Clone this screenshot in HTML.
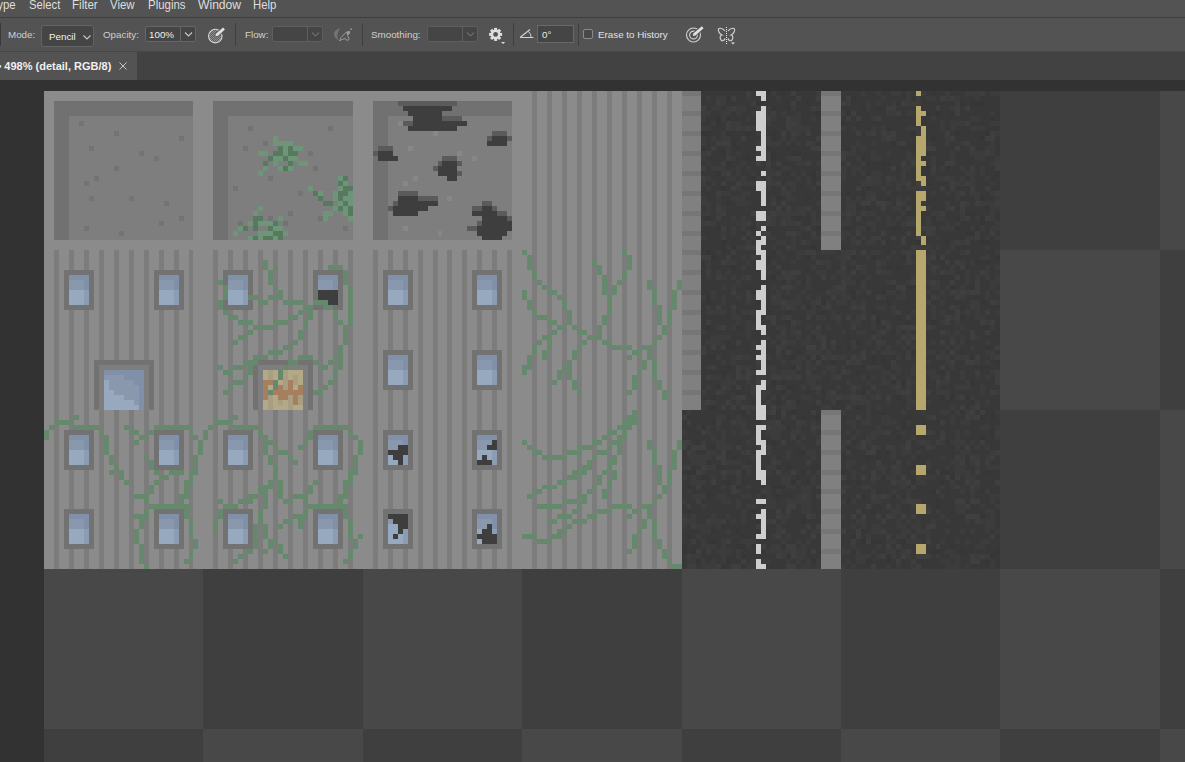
<!DOCTYPE html>
<html><head><meta charset="utf-8"><title>Photoshop</title>
<style>
*{margin:0;padding:0;box-sizing:border-box}
html,body{width:1185px;height:762px;overflow:hidden;background:#323232;font-family:"Liberation Sans",sans-serif;}
#app{position:relative;width:1185px;height:762px;overflow:hidden;background:#323232}
.abs{position:absolute}
#menubar{left:0;top:0;width:1185px;height:17px;background:#535353}
#menubar span{position:absolute;top:-3.3px;font-size:12.6px;line-height:16px;color:#dedede;white-space:nowrap;transform-origin:0 0}
#mline{left:0;top:17px;width:1185px;height:1px;background:#3e3e3e}
#optbar{left:0;top:18px;width:1185px;height:33px;background:#535353}
#oline{left:0;top:51px;width:1185px;height:1px;background:#464646}
#tabbar{left:0;top:52px;width:1185px;height:28px;background:#424242}
#tab{left:0;top:52px;width:137px;height:28px;background:#535353}
.lbl{position:absolute;font-size:9.8px;line-height:12px;color:#cfcfcf;white-space:nowrap}
.sep{position:absolute;top:23px;width:1px;height:23px;background:#3f3f3f}
.box{position:absolute;background:#454545;border:1px solid #666}
.art{position:absolute;left:0;top:0}
svg.ic{position:absolute;overflow:visible}
</style></head><body><div id="app">
<svg class="art" width="1185" height="762" viewBox="0 0 1185 762" shape-rendering="crispEdges"><path fill="#767676" d="M682 91h19v5h-19zM821 91h20v5h-20zM682 111h19v5h-19zM821 111h20v5h-20zM682 131h19v5h-19zM821 131h20v5h-20zM682 151h19v5h-19zM821 151h20v5h-20zM682 171h19v5h-19zM821 171h20v5h-20zM682 191h19v5h-19zM821 191h20v5h-20zM682 211h19v5h-19zM821 211h20v5h-20zM682 231h19v5h-19zM821 231h20v5h-20zM682 250h19v5h-19zM682 270h19v5h-19zM682 290h19v5h-19zM682 310h19v5h-19zM682 330h19v5h-19zM682 350h19v5h-19zM682 370h19v5h-19zM682 390h19v5h-19zM821 410h20v5h-20zM821 430h20v5h-20zM821 450h20v5h-20zM821 470h20v5h-20zM821 489h20v5h-20zM821 509h20v5h-20zM821 529h20v5h-20zM821 549h20v5h-20z"/><path fill="#383838" d="M701 91h45v5h-45zM751 91h5v5h-5zM776 91h5v5h-5zM786 91h5v5h-5zM796 91h20v5h-20zM841 91h20v5h-20zM866 91h10v5h-10zM881 91h10v5h-10zM901 91h5v5h-5zM911 91h5v5h-5zM926 91h5v5h-5zM936 91h9v5h-9zM950 91h15v5h-15zM985 91h5v5h-5zM701 96h5v5h-5zM711 96h5v5h-5zM736 96h10v5h-10zM751 96h10v5h-10zM766 96h10v5h-10zM781 96h15v5h-15zM801 96h15v5h-15zM841 96h5v5h-5zM856 96h25v5h-25zM886 96h20v5h-20zM921 96h5v5h-5zM936 96h4v5h-4zM960 96h15v5h-15zM980 96h20v5h-20zM701 101h15v5h-15zM726 101h25v5h-25zM761 101h30v5h-30zM796 101h10v5h-10zM811 101h10v5h-10zM851 101h15v5h-15zM881 101h10v5h-10zM921 101h34v5h-34zM965 101h5v5h-5zM985 101h15v5h-15zM706 106h5v5h-5zM721 106h5v5h-5zM746 106h10v5h-10zM776 106h10v5h-10zM796 106h15v5h-15zM841 106h20v5h-20zM871 101h5v10h-5zM881 106h5v5h-5zM896 106h20v5h-20zM921 106h15v5h-15zM960 106h5v5h-5zM970 106h30v5h-30zM711 111h10v5h-10zM731 111h5v5h-5zM741 111h10v5h-10zM776 111h5v5h-5zM786 111h10v5h-10zM801 111h15v5h-15zM856 111h30v5h-30zM901 111h5v5h-5zM931 111h5v5h-5zM940 106h10v10h-10zM960 111h30v5h-30zM706 116h10v5h-10zM731 116h15v5h-15zM751 116h5v5h-5zM776 116h10v5h-10zM801 116h10v5h-10zM816 116h5v5h-5zM841 116h5v5h-5zM851 116h5v5h-5zM861 116h10v5h-10zM881 116h35v5h-35zM921 116h10v5h-10zM936 116h34v5h-34zM980 116h10v5h-10zM995 111h5v10h-5zM701 121h10v5h-10zM721 121h5v5h-5zM741 121h15v5h-15zM771 121h15v5h-15zM801 121h20v5h-20zM846 121h10v5h-10zM861 121h55v5h-55zM921 121h19v5h-19zM970 121h10v5h-10zM985 121h5v5h-5zM711 126h15v5h-15zM766 126h20v5h-20zM846 126h5v5h-5zM856 126h15v5h-15zM891 126h15v5h-15zM926 126h14v5h-14zM945 121h5v10h-5zM955 126h15v5h-15zM985 126h15v5h-15zM711 131h10v5h-10zM731 131h15v5h-15zM751 131h5v5h-5zM766 131h5v5h-5zM801 131h5v5h-5zM811 126h10v10h-10zM841 131h15v5h-15zM861 131h5v5h-5zM876 126h5v10h-5zM896 131h15v5h-15zM926 131h19v5h-19zM950 131h5v5h-5zM960 131h25v5h-25zM706 136h5v5h-5zM716 136h5v5h-5zM731 136h10v5h-10zM746 136h15v5h-15zM776 131h5v10h-5zM786 131h5v10h-5zM796 136h20v5h-20zM841 136h40v5h-40zM896 136h20v5h-20zM926 136h5v5h-5zM936 136h9v5h-9zM955 136h25v5h-25zM706 141h10v5h-10zM736 141h20v5h-20zM781 141h5v5h-5zM791 141h5v5h-5zM801 141h5v5h-5zM816 141h5v5h-5zM841 141h15v5h-15zM861 141h10v5h-10zM876 141h15v5h-15zM906 141h10v5h-10zM931 141h14v5h-14zM950 141h10v5h-10zM970 141h20v5h-20zM706 146h5v5h-5zM716 146h10v5h-10zM771 146h15v5h-15zM791 146h20v5h-20zM841 146h5v5h-5zM856 146h5v5h-5zM866 146h35v5h-35zM906 146h5v5h-5zM936 146h19v5h-19zM960 146h10v5h-10zM975 146h10v5h-10zM711 151h10v5h-10zM731 146h5v10h-5zM741 146h15v10h-15zM776 151h15v5h-15zM856 151h15v5h-15zM876 151h10v5h-10zM891 151h15v5h-15zM911 151h5v5h-5zM931 151h19v5h-19zM955 151h15v5h-15zM995 136h5v20h-5zM706 156h20v5h-20zM736 156h10v5h-10zM751 156h5v5h-5zM776 156h10v5h-10zM801 151h20v10h-20zM846 156h10v5h-10zM866 156h5v5h-5zM881 156h25v5h-25zM921 156h10v5h-10zM936 156h14v5h-14zM955 156h20v5h-20zM985 156h10v5h-10zM701 161h5v5h-5zM711 161h10v5h-10zM731 161h10v5h-10zM746 161h10v5h-10zM761 161h5v5h-5zM771 161h5v5h-5zM781 161h15v5h-15zM811 161h5v5h-5zM841 161h5v5h-5zM851 161h10v5h-10zM871 161h10v5h-10zM891 161h10v5h-10zM906 161h5v5h-5zM926 161h5v5h-5zM936 161h9v5h-9zM955 161h35v5h-35zM706 166h5v5h-5zM726 166h10v5h-10zM741 166h5v5h-5zM751 166h15v5h-15zM771 166h10v5h-10zM791 166h30v5h-30zM861 166h20v5h-20zM886 166h5v5h-5zM911 166h5v5h-5zM921 166h5v5h-5zM936 166h4v5h-4zM950 166h10v5h-10zM965 166h5v5h-5zM701 171h15v5h-15zM731 171h5v5h-5zM741 171h10v5h-10zM756 171h5v5h-5zM781 171h5v5h-5zM796 171h5v5h-5zM806 171h5v5h-5zM846 166h5v10h-5zM856 171h5v5h-5zM881 171h20v5h-20zM921 171h10v5h-10zM936 171h29v5h-29zM975 166h5v10h-5zM985 166h10v10h-10zM711 176h15v5h-15zM736 176h5v5h-5zM746 176h5v5h-5zM761 176h5v5h-5zM771 176h25v5h-25zM801 176h5v5h-5zM816 176h5v5h-5zM846 176h20v5h-20zM896 176h5v5h-5zM906 171h10v10h-10zM926 176h10v5h-10zM955 176h5v5h-5zM965 176h5v5h-5zM975 176h10v5h-10zM716 181h5v5h-5zM726 181h10v5h-10zM781 181h5v5h-5zM796 181h10v5h-10zM811 181h5v5h-5zM841 181h20v5h-20zM881 176h5v10h-5zM891 181h5v5h-5zM911 181h5v5h-5zM931 181h19v5h-19zM975 181h15v5h-15zM995 176h5v10h-5zM701 186h5v5h-5zM711 186h10v5h-10zM726 186h5v5h-5zM741 186h15v5h-15zM771 186h10v5h-10zM786 186h5v5h-5zM796 186h15v5h-15zM841 186h15v5h-15zM861 186h5v5h-5zM871 186h10v5h-10zM886 186h10v5h-10zM901 186h5v5h-5zM926 186h14v5h-14zM945 186h5v5h-5zM955 186h15v5h-15zM975 186h10v5h-10zM990 186h10v5h-10zM701 191h15v5h-15zM731 191h10v5h-10zM751 191h10v5h-10zM766 191h15v5h-15zM791 191h30v5h-30zM851 191h10v5h-10zM891 191h25v5h-25zM926 191h5v5h-5zM936 191h9v5h-9zM950 191h5v5h-5zM965 191h5v5h-5zM980 191h10v5h-10zM706 196h10v5h-10zM721 196h10v5h-10zM746 196h15v5h-15zM781 196h5v5h-5zM796 196h10v5h-10zM811 196h10v5h-10zM851 196h5v5h-5zM861 196h5v5h-5zM876 191h10v10h-10zM901 196h5v5h-5zM911 196h5v5h-5zM926 196h29v5h-29zM960 196h15v5h-15zM985 196h10v5h-10zM721 201h5v5h-5zM731 201h5v5h-5zM751 201h10v5h-10zM766 196h5v10h-5zM776 201h5v5h-5zM786 201h30v5h-30zM856 201h5v5h-5zM871 201h5v5h-5zM891 196h5v10h-5zM906 201h10v5h-10zM926 201h19v5h-19zM950 201h10v5h-10zM970 201h5v5h-5zM701 206h5v5h-5zM726 206h50v5h-50zM781 206h5v5h-5zM791 206h5v5h-5zM811 206h10v5h-10zM841 191h5v20h-5zM861 206h5v5h-5zM871 206h10v5h-10zM886 206h5v5h-5zM901 206h5v5h-5zM931 206h14v5h-14zM955 206h5v5h-5zM965 206h20v5h-20zM726 211h25v5h-25zM806 211h5v5h-5zM856 211h5v5h-5zM876 211h25v5h-25zM911 206h5v10h-5zM921 211h10v5h-10zM945 211h15v5h-15zM975 211h15v5h-15zM701 216h5v5h-5zM711 201h5v20h-5zM721 216h10v5h-10zM736 216h5v5h-5zM746 216h10v5h-10zM791 216h5v5h-5zM801 216h5v5h-5zM816 211h5v10h-5zM841 216h5v5h-5zM851 216h5v5h-5zM861 216h15v5h-15zM881 216h5v5h-5zM891 216h5v5h-5zM901 216h5v5h-5zM945 216h10v5h-10zM970 216h5v5h-5zM995 211h5v10h-5zM716 221h20v5h-20zM751 221h5v5h-5zM776 216h5v10h-5zM801 221h10v5h-10zM851 221h15v5h-15zM876 221h10v5h-10zM896 221h5v5h-5zM921 216h5v10h-5zM931 221h14v5h-14zM950 221h5v5h-5zM960 221h20v5h-20zM985 221h10v5h-10zM701 226h15v5h-15zM736 226h5v5h-5zM746 226h5v5h-5zM771 226h30v5h-30zM811 226h5v5h-5zM841 226h5v5h-5zM876 226h15v5h-15zM901 226h15v5h-15zM936 226h4v5h-4zM960 226h10v5h-10zM985 226h5v5h-5zM701 231h20v5h-20zM726 226h5v10h-5zM736 231h10v5h-10zM751 231h5v5h-5zM771 231h15v5h-15zM801 231h10v5h-10zM816 231h5v5h-5zM851 226h5v10h-5zM861 231h20v5h-20zM886 231h20v5h-20zM911 231h5v5h-5zM921 231h5v5h-5zM936 231h29v5h-29zM980 231h10v5h-10zM995 231h5v5h-5zM706 236h15v4h-15zM726 236h15v4h-15zM746 236h5v4h-5zM756 236h5v4h-5zM776 236h15v4h-15zM796 236h15v4h-15zM846 236h5v4h-5zM856 236h5v4h-5zM866 236h5v4h-5zM881 236h10v4h-10zM896 236h5v4h-5zM926 236h10v4h-10zM940 236h25v4h-25zM980 236h5v4h-5zM990 236h5v4h-5zM726 240h20v5h-20zM751 240h5v5h-5zM766 240h10v5h-10zM786 240h5v5h-5zM796 240h5v5h-5zM811 240h10v5h-10zM841 240h10v5h-10zM861 240h5v5h-5zM876 240h5v5h-5zM891 240h10v5h-10zM906 236h10v9h-10zM926 240h19v5h-19zM970 240h10v5h-10zM701 240h20v10h-20zM776 245h10v5h-10zM796 245h15v5h-15zM846 245h65v5h-65zM931 245h5v5h-5zM940 245h10v5h-10zM955 245h30v5h-30zM990 240h10v10h-10zM701 250h5v5h-5zM711 250h5v5h-5zM721 250h10v5h-10zM736 250h20v5h-20zM766 245h5v10h-5zM781 250h15v5h-15zM816 245h5v10h-5zM836 250h5v5h-5zM856 250h5v5h-5zM866 250h5v5h-5zM881 250h5v5h-5zM896 250h5v5h-5zM926 250h5v5h-5zM936 250h9v5h-9zM950 250h10v5h-10zM970 250h25v5h-25zM716 255h10v5h-10zM731 255h10v5h-10zM746 255h5v5h-5zM771 255h10v5h-10zM786 255h10v5h-10zM801 255h5v5h-5zM816 255h20v5h-20zM856 255h10v5h-10zM876 255h10v5h-10zM891 255h10v5h-10zM911 255h5v5h-5zM945 255h35v5h-35zM990 255h5v5h-5zM711 260h10v5h-10zM736 260h10v5h-10zM751 260h5v5h-5zM776 260h15v5h-15zM796 260h20v5h-20zM846 260h5v5h-5zM856 260h20v5h-20zM886 260h20v5h-20zM931 260h9v5h-9zM950 260h5v5h-5zM965 260h5v5h-5zM980 260h5v5h-5zM990 260h10v5h-10zM711 265h20v5h-20zM736 265h5v5h-5zM746 265h10v5h-10zM766 265h10v5h-10zM781 265h30v5h-30zM816 265h10v5h-10zM831 260h10v10h-10zM846 265h10v5h-10zM881 265h5v5h-5zM891 265h5v5h-5zM901 265h15v5h-15zM940 265h10v5h-10zM955 265h5v5h-5zM965 265h20v5h-20zM990 265h5v5h-5zM721 270h5v5h-5zM731 270h30v5h-30zM771 270h10v5h-10zM801 270h15v5h-15zM826 270h10v5h-10zM846 270h5v5h-5zM856 270h5v5h-5zM866 265h10v10h-10zM891 270h25v5h-25zM926 265h5v10h-5zM936 270h4v5h-4zM955 270h10v5h-10zM970 270h10v5h-10zM990 270h10v5h-10zM701 260h5v20h-5zM711 270h5v10h-5zM726 275h5v5h-5zM736 275h5v5h-5zM751 275h10v5h-10zM766 275h5v5h-5zM796 275h10v5h-10zM811 275h10v5h-10zM826 275h5v5h-5zM836 275h5v5h-5zM851 275h10v5h-10zM871 275h40v5h-40zM926 275h14v5h-14zM945 275h10v5h-10zM960 275h5v5h-5zM980 275h5v5h-5zM990 275h5v5h-5zM701 280h35v5h-35zM741 280h40v5h-40zM791 280h5v5h-5zM811 280h30v5h-30zM866 280h20v5h-20zM896 280h10v5h-10zM940 280h10v5h-10zM955 280h10v5h-10zM970 275h5v10h-5zM701 285h20v5h-20zM726 285h5v5h-5zM751 285h10v5h-10zM766 285h5v5h-5zM776 285h5v5h-5zM796 285h10v5h-10zM811 285h20v5h-20zM846 285h15v5h-15zM866 285h25v5h-25zM926 285h5v5h-5zM940 285h5v5h-5zM955 285h5v5h-5zM965 285h10v5h-10zM980 280h10v10h-10zM995 285h5v5h-5zM701 290h10v5h-10zM716 290h15v5h-15zM736 285h10v10h-10zM751 290h5v5h-5zM766 290h10v5h-10zM781 290h5v5h-5zM791 290h10v5h-10zM806 290h20v5h-20zM846 290h5v5h-5zM861 290h5v5h-5zM871 290h10v5h-10zM896 290h5v5h-5zM931 290h9v5h-9zM945 290h5v5h-5zM980 290h5v5h-5zM990 290h5v5h-5zM716 295h5v5h-5zM726 295h10v5h-10zM741 295h5v5h-5zM781 295h15v5h-15zM801 295h5v5h-5zM811 295h5v5h-5zM821 295h10v5h-10zM836 295h5v5h-5zM856 295h20v5h-20zM886 295h10v5h-10zM906 290h10v10h-10zM926 295h5v5h-5zM940 295h15v5h-15zM965 295h20v5h-20zM990 295h10v5h-10zM711 300h10v5h-10zM726 300h20v5h-20zM751 300h5v5h-5zM766 295h5v10h-5zM801 300h10v5h-10zM831 300h5v5h-5zM846 300h5v5h-5zM856 300h5v5h-5zM866 300h20v5h-20zM891 300h25v5h-25zM931 300h9v5h-9zM945 300h25v5h-25zM985 300h5v5h-5zM711 305h5v5h-5zM721 305h10v5h-10zM736 305h25v5h-25zM766 305h15v5h-15zM796 305h5v5h-5zM831 305h20v5h-20zM866 305h10v5h-10zM886 305h5v5h-5zM896 305h20v5h-20zM936 305h14v5h-14zM965 305h5v5h-5zM980 305h20v5h-20zM701 300h5v15h-5zM726 310h5v5h-5zM736 310h5v5h-5zM771 310h15v5h-15zM816 305h5v10h-5zM836 310h25v5h-25zM876 310h15v5h-15zM901 310h10v5h-10zM936 310h4v5h-4zM945 310h10v5h-10zM960 310h5v5h-5zM970 310h5v5h-5zM980 310h5v5h-5zM990 310h5v5h-5zM701 315h30v5h-30zM761 315h5v5h-5zM776 315h5v5h-5zM791 310h15v10h-15zM811 315h5v5h-5zM826 310h5v10h-5zM841 315h5v5h-5zM851 315h5v5h-5zM866 310h5v10h-5zM881 315h15v5h-15zM901 315h5v5h-5zM936 315h9v5h-9zM965 315h10v5h-10zM985 315h15v5h-15zM711 320h25v5h-25zM751 315h5v10h-5zM761 320h10v5h-10zM776 320h10v5h-10zM801 320h35v5h-35zM841 320h10v5h-10zM861 320h10v5h-10zM891 320h15v5h-15zM911 315h5v10h-5zM926 305h5v20h-5zM936 320h4v5h-4zM950 320h5v5h-5zM960 320h20v5h-20zM701 320h5v10h-5zM711 325h5v5h-5zM726 325h5v5h-5zM741 315h5v15h-5zM766 325h10v5h-10zM796 325h10v5h-10zM811 325h5v5h-5zM821 325h5v5h-5zM831 325h20v5h-20zM856 325h15v5h-15zM876 325h10v5h-10zM891 325h5v5h-5zM936 325h24v5h-24zM965 325h20v5h-20zM995 320h5v10h-5zM706 330h40v5h-40zM766 330h15v5h-15zM786 325h5v10h-5zM801 330h10v5h-10zM821 330h20v5h-20zM846 330h10v5h-10zM866 330h10v5h-10zM886 330h5v5h-5zM901 330h5v5h-5zM911 330h5v5h-5zM926 330h14v5h-14zM950 330h5v5h-5zM960 330h10v5h-10zM975 330h10v5h-10zM990 330h10v5h-10zM701 335h10v5h-10zM731 335h15v5h-15zM751 330h10v10h-10zM771 335h5v5h-5zM786 335h10v5h-10zM801 335h5v5h-5zM826 335h20v5h-20zM851 335h20v5h-20zM881 335h20v5h-20zM926 335h24v5h-24zM965 335h5v5h-5zM980 335h20v5h-20zM701 340h5v5h-5zM721 340h5v5h-5zM731 340h5v5h-5zM741 340h10v5h-10zM756 340h5v5h-5zM766 340h5v5h-5zM776 340h5v5h-5zM796 340h5v5h-5zM811 340h10v5h-10zM836 340h15v5h-15zM861 340h5v5h-5zM871 340h5v5h-5zM886 340h10v5h-10zM901 340h5v5h-5zM911 340h5v5h-5zM926 340h5v5h-5zM936 340h4v5h-4zM945 340h5v5h-5zM955 335h5v10h-5zM970 340h15v5h-15zM990 340h10v5h-10zM706 345h5v5h-5zM716 345h5v5h-5zM736 345h15v5h-15zM786 345h20v5h-20zM816 345h5v5h-5zM826 340h5v10h-5zM841 345h5v5h-5zM856 345h20v5h-20zM881 345h5v5h-5zM891 345h10v5h-10zM906 345h5v5h-5zM926 345h19v5h-19zM950 345h5v5h-5zM960 345h10v5h-10zM975 345h10v5h-10zM990 345h5v5h-5zM706 350h55v5h-55zM766 345h10v10h-10zM781 350h5v5h-5zM791 350h5v5h-5zM801 350h5v5h-5zM821 350h5v5h-5zM831 350h30v5h-30zM896 350h10v5h-10zM936 350h4v5h-4zM945 350h5v5h-5zM955 350h5v5h-5zM965 350h20v5h-20zM995 350h5v5h-5zM701 355h5v5h-5zM721 355h10v5h-10zM751 355h5v5h-5zM771 355h5v5h-5zM781 355h10v5h-10zM806 355h5v5h-5zM846 355h5v5h-5zM866 350h5v10h-5zM901 355h5v5h-5zM911 355h5v5h-5zM926 355h10v5h-10zM950 355h5v5h-5zM980 355h10v5h-10zM701 360h20v5h-20zM726 360h5v5h-5zM736 360h20v5h-20zM766 360h15v5h-15zM786 360h5v5h-5zM811 360h5v5h-5zM821 360h10v5h-10zM836 360h10v5h-10zM861 360h10v5h-10zM876 350h5v15h-5zM886 355h5v10h-5zM896 360h20v5h-20zM931 360h14v5h-14zM955 360h10v5h-10zM980 360h5v5h-5zM990 360h5v5h-5zM701 365h5v5h-5zM716 365h10v5h-10zM731 365h5v5h-5zM751 365h5v5h-5zM776 365h15v5h-15zM801 360h5v10h-5zM816 365h10v5h-10zM846 365h15v5h-15zM881 365h5v5h-5zM926 365h14v5h-14zM945 365h5v5h-5zM955 365h25v5h-25zM990 365h10v5h-10zM701 370h20v5h-20zM726 370h10v5h-10zM741 370h5v5h-5zM776 370h5v5h-5zM796 370h10v5h-10zM811 370h10v5h-10zM826 370h5v5h-5zM836 365h5v10h-5zM851 370h5v5h-5zM861 370h20v5h-20zM891 370h5v5h-5zM901 365h10v10h-10zM936 370h4v5h-4zM980 370h10v5h-10zM701 375h5v5h-5zM721 375h5v5h-5zM731 375h5v5h-5zM766 370h5v10h-5zM801 375h5v5h-5zM821 375h10v5h-10zM841 375h20v5h-20zM876 375h5v5h-5zM886 375h5v5h-5zM896 375h10v5h-10zM911 375h5v5h-5zM926 375h5v5h-5zM940 375h5v5h-5zM950 370h10v10h-10zM965 370h10v10h-10zM980 375h5v5h-5zM990 375h5v5h-5zM701 380h20v5h-20zM736 380h10v5h-10zM751 375h5v10h-5zM776 380h5v5h-5zM786 380h20v5h-20zM816 380h30v5h-30zM851 380h15v5h-15zM871 380h10v5h-10zM950 380h15v5h-15zM975 380h20v5h-20zM701 385h5v5h-5zM711 385h5v5h-5zM731 385h5v5h-5zM766 385h10v5h-10zM796 385h5v5h-5zM806 385h5v5h-5zM821 385h15v5h-15zM841 385h10v5h-10zM861 385h10v5h-10zM876 385h15v5h-15zM901 385h5v5h-5zM926 380h10v10h-10zM940 385h15v5h-15zM970 385h10v5h-10zM985 385h15v5h-15zM706 390h10v5h-10zM726 390h10v5h-10zM741 385h10v10h-10zM771 390h10v5h-10zM791 390h15v5h-15zM811 390h5v5h-5zM836 390h15v5h-15zM856 390h5v5h-5zM871 390h5v5h-5zM881 390h15v5h-15zM931 390h5v5h-5zM950 390h30v5h-30zM985 390h5v5h-5zM701 395h10v5h-10zM716 395h15v5h-15zM746 395h10v5h-10zM766 395h5v5h-5zM786 395h15v5h-15zM811 395h15v5h-15zM866 395h5v5h-5zM881 395h5v5h-5zM891 395h5v5h-5zM901 395h5v5h-5zM911 385h5v15h-5zM926 395h14v5h-14zM975 395h25v5h-25zM716 400h10v5h-10zM731 400h5v5h-5zM741 400h10v5h-10zM761 400h5v5h-5zM771 400h5v5h-5zM781 400h5v5h-5zM801 400h15v5h-15zM821 400h10v5h-10zM841 400h10v5h-10zM871 400h15v5h-15zM891 400h10v5h-10zM931 400h39v5h-39zM980 400h5v5h-5zM990 400h10v5h-10zM706 405h5v5h-5zM716 405h5v5h-5zM726 405h5v5h-5zM736 405h5v5h-5zM766 405h5v5h-5zM776 405h5v5h-5zM831 405h15v5h-15zM851 405h5v5h-5zM861 405h5v5h-5zM871 405h5v5h-5zM881 405h25v5h-25zM911 405h5v5h-5zM926 405h24v5h-24zM955 405h5v5h-5zM965 405h5v5h-5zM980 405h20v5h-20zM682 410h5v5h-5zM691 410h50v5h-50zM796 405h15v10h-15zM816 405h5v10h-5zM846 410h20v5h-20zM886 410h15v5h-15zM906 410h15v5h-15zM926 410h14v5h-14zM950 410h5v5h-5zM975 410h5v5h-5zM985 410h10v5h-10zM687 415h29v5h-29zM731 415h5v5h-5zM741 415h5v5h-5zM751 410h5v10h-5zM771 415h5v5h-5zM786 410h5v10h-5zM796 415h5v5h-5zM806 415h10v5h-10zM841 415h15v5h-15zM861 415h5v5h-5zM891 415h15v5h-15zM911 415h15v5h-15zM936 415h14v5h-14zM955 415h10v5h-10zM985 415h5v5h-5zM995 415h5v5h-5zM682 420h5v5h-5zM691 420h20v5h-20zM721 420h10v5h-10zM746 420h15v5h-15zM786 420h10v5h-10zM806 420h5v5h-5zM816 420h5v5h-5zM841 420h5v5h-5zM856 420h5v5h-5zM871 410h10v15h-10zM896 420h5v5h-5zM911 420h10v5h-10zM926 420h10v5h-10zM945 420h5v5h-5zM955 420h5v5h-5zM970 420h30v5h-30zM682 425h14v5h-14zM711 425h5v5h-5zM721 425h20v5h-20zM746 425h10v5h-10zM791 425h5v5h-5zM841 425h10v5h-10zM856 425h20v5h-20zM881 425h15v5h-15zM926 425h54v5h-54zM990 425h5v5h-5zM687 430h14v5h-14zM711 430h10v5h-10zM726 430h5v5h-5zM736 430h5v5h-5zM751 430h5v5h-5zM761 430h5v5h-5zM801 425h10v10h-10zM816 430h5v5h-5zM841 430h5v5h-5zM851 430h5v5h-5zM861 430h10v5h-10zM891 430h10v5h-10zM906 425h10v10h-10zM960 430h5v5h-5zM970 430h20v5h-20zM682 435h29v5h-29zM716 435h5v5h-5zM726 435h25v5h-25zM761 435h10v5h-10zM781 430h10v10h-10zM806 435h10v5h-10zM841 435h10v5h-10zM856 435h10v5h-10zM876 435h20v5h-20zM901 435h10v5h-10zM916 435h24v5h-24zM945 430h10v10h-10zM960 435h20v5h-20zM985 435h10v5h-10zM691 440h5v5h-5zM706 440h10v5h-10zM726 440h10v5h-10zM741 440h5v5h-5zM751 440h5v5h-5zM766 440h5v5h-5zM776 440h5v5h-5zM786 440h10v5h-10zM801 440h15v5h-15zM856 440h5v5h-5zM871 440h35v5h-35zM911 440h5v5h-5zM931 440h5v5h-5zM965 440h5v5h-5zM975 440h5v5h-5zM985 440h15v5h-15zM687 445h4v5h-4zM706 445h5v5h-5zM731 445h5v5h-5zM741 445h15v5h-15zM771 445h30v5h-30zM806 445h15v5h-15zM851 445h5v5h-5zM866 445h5v5h-5zM911 445h15v5h-15zM936 445h14v5h-14zM960 445h5v5h-5zM970 445h5v5h-5zM980 445h5v5h-5zM990 445h10v5h-10zM696 450h10v5h-10zM716 450h5v5h-5zM731 450h10v5h-10zM751 450h5v5h-5zM771 450h15v5h-15zM791 450h5v5h-5zM841 450h5v5h-5zM851 450h15v5h-15zM881 445h5v10h-5zM896 445h5v10h-5zM911 450h5v5h-5zM921 450h39v5h-39zM970 450h20v5h-20zM682 450h5v10h-5zM711 455h5v5h-5zM726 455h5v5h-5zM736 455h15v5h-15zM781 455h5v5h-5zM791 455h20v5h-20zM816 450h5v10h-5zM841 455h25v5h-25zM871 455h5v5h-5zM881 455h10v5h-10zM896 455h15v5h-15zM921 455h19v5h-19zM945 455h10v5h-10zM965 455h5v5h-5zM995 455h5v5h-5zM682 460h9v5h-9zM711 460h10v5h-10zM741 460h5v5h-5zM761 455h10v10h-10zM781 460h25v5h-25zM811 460h10v5h-10zM856 460h20v5h-20zM881 460h15v5h-15zM901 460h5v5h-5zM911 460h15v5h-15zM931 460h19v5h-19zM990 460h10v5h-10zM691 465h10v5h-10zM721 465h20v5h-20zM761 465h5v5h-5zM781 465h5v5h-5zM791 465h20v5h-20zM841 460h5v10h-5zM851 465h10v5h-10zM866 465h10v5h-10zM931 465h14v5h-14zM965 465h10v5h-10zM682 470h5v5h-5zM706 470h15v5h-15zM751 460h5v15h-5zM771 470h5v5h-5zM781 470h10v5h-10zM796 470h5v5h-5zM811 470h5v5h-5zM856 470h15v5h-15zM876 470h5v5h-5zM886 465h5v10h-5zM901 465h10v10h-10zM926 470h10v5h-10zM950 465h5v10h-5zM970 470h5v5h-5zM980 455h5v20h-5zM990 470h10v5h-10zM687 475h4v5h-4zM696 475h5v5h-5zM726 475h10v5h-10zM741 475h15v5h-15zM791 475h5v5h-5zM801 475h10v5h-10zM846 470h5v10h-5zM856 475h5v5h-5zM866 475h5v5h-5zM896 475h5v5h-5zM906 475h10v5h-10zM936 475h9v5h-9zM960 475h5v5h-5zM975 475h25v5h-25zM682 480h9v5h-9zM706 475h5v10h-5zM731 480h5v5h-5zM746 480h15v5h-15zM766 475h15v10h-15zM801 480h5v5h-5zM816 475h5v10h-5zM841 480h5v5h-5zM851 480h5v5h-5zM861 480h10v5h-10zM876 480h15v5h-15zM926 480h14v5h-14zM955 480h10v5h-10zM980 480h15v5h-15zM691 485h5v4h-5zM701 485h10v4h-10zM716 475h5v14h-5zM726 485h5v4h-5zM741 485h5v4h-5zM751 485h15v4h-15zM796 485h5v4h-5zM811 485h5v4h-5zM851 485h10v4h-10zM871 485h30v4h-30zM906 485h5v4h-5zM916 485h24v4h-24zM945 480h5v9h-5zM960 485h10v4h-10zM980 485h20v4h-20zM682 485h5v9h-5zM691 489h15v5h-15zM711 489h20v5h-20zM741 489h20v5h-20zM781 489h20v5h-20zM811 489h10v5h-10zM846 489h25v5h-25zM881 489h10v5h-10zM896 489h10v5h-10zM911 489h20v5h-20zM940 489h20v5h-20zM965 489h5v5h-5zM975 489h5v5h-5zM990 489h10v5h-10zM682 494h9v5h-9zM711 494h5v5h-5zM726 494h15v5h-15zM751 494h5v5h-5zM761 494h5v5h-5zM771 489h5v10h-5zM781 494h15v5h-15zM811 494h5v5h-5zM841 494h15v5h-15zM866 494h5v5h-5zM911 494h29v5h-29zM945 494h25v5h-25zM975 494h15v5h-15zM687 499h9v5h-9zM701 499h20v5h-20zM731 499h5v5h-5zM741 499h15v5h-15zM856 499h15v5h-15zM881 499h20v5h-20zM921 499h15v5h-15zM965 499h5v5h-5zM980 499h10v5h-10zM995 499h5v5h-5zM691 504h10v5h-10zM706 504h30v5h-30zM741 504h5v5h-5zM756 504h10v5h-10zM776 499h10v10h-10zM796 504h5v5h-5zM841 504h25v5h-25zM871 504h5v5h-5zM881 504h5v5h-5zM891 504h5v5h-5zM901 504h10v5h-10zM940 499h15v10h-15zM970 504h10v5h-10zM985 504h10v5h-10zM682 504h5v10h-5zM691 509h50v5h-50zM756 509h5v5h-5zM781 509h5v5h-5zM811 499h10v15h-10zM841 509h15v5h-15zM861 509h10v5h-10zM876 509h15v5h-15zM901 509h15v5h-15zM931 504h5v10h-5zM940 509h10v5h-10zM965 509h20v5h-20zM687 514h4v5h-4zM696 514h15v5h-15zM716 514h10v5h-10zM731 514h10v5h-10zM746 509h5v10h-5zM766 509h10v10h-10zM791 509h10v10h-10zM816 514h5v5h-5zM846 514h5v5h-5zM856 514h5v5h-5zM866 514h10v5h-10zM881 514h5v5h-5zM896 514h5v5h-5zM906 514h5v5h-5zM916 514h24v5h-24zM945 514h20v5h-20zM985 514h5v5h-5zM696 519h10v5h-10zM726 519h5v5h-5zM736 519h5v5h-5zM746 519h10v5h-10zM776 519h5v5h-5zM786 519h15v5h-15zM806 519h15v5h-15zM841 519h15v5h-15zM866 519h15v5h-15zM886 519h10v5h-10zM901 519h5v5h-5zM911 519h5v5h-5zM921 519h10v5h-10zM936 519h9v5h-9zM950 519h15v5h-15zM970 519h5v5h-5zM687 524h4v5h-4zM711 524h5v5h-5zM726 524h30v5h-30zM781 524h25v5h-25zM811 524h5v5h-5zM841 524h10v5h-10zM856 524h5v5h-5zM881 524h15v5h-15zM906 524h5v5h-5zM921 524h5v5h-5zM936 524h49v5h-49zM995 509h5v20h-5zM682 529h19v5h-19zM716 529h10v5h-10zM731 529h5v5h-5zM741 529h15v5h-15zM766 524h10v10h-10zM786 529h15v5h-15zM806 529h5v5h-5zM846 529h10v5h-10zM866 524h5v10h-5zM886 529h15v5h-15zM911 529h5v5h-5zM931 529h14v5h-14zM950 529h10v5h-10zM965 529h5v5h-5zM975 529h10v5h-10zM990 529h5v5h-5zM682 534h5v5h-5zM691 534h5v5h-5zM701 534h40v5h-40zM746 534h10v5h-10zM766 534h5v5h-5zM781 534h5v5h-5zM791 534h20v5h-20zM816 534h5v5h-5zM861 534h5v5h-5zM871 534h15v5h-15zM891 534h5v5h-5zM906 534h5v5h-5zM916 534h10v5h-10zM931 534h59v5h-59zM995 534h5v5h-5zM682 539h9v5h-9zM696 539h5v5h-5zM706 539h5v5h-5zM731 539h10v5h-10zM756 539h25v5h-25zM786 539h10v5h-10zM801 539h5v5h-5zM811 539h10v5h-10zM856 539h5v5h-5zM896 539h5v5h-5zM921 539h5v5h-5zM931 539h9v5h-9zM945 539h10v5h-10zM960 539h5v5h-5zM970 539h10v5h-10zM990 539h10v5h-10zM687 544h14v5h-14zM716 539h5v10h-5zM726 544h10v5h-10zM766 544h5v5h-5zM796 544h5v5h-5zM806 544h15v5h-15zM841 534h10v15h-10zM856 544h20v5h-20zM881 539h5v10h-5zM891 544h5v5h-5zM901 544h15v5h-15zM926 544h10v5h-10zM940 544h10v5h-10zM955 544h20v5h-20zM985 544h15v5h-15zM687 549h4v5h-4zM701 549h5v5h-5zM711 549h5v5h-5zM731 549h5v5h-5zM741 549h15v5h-15zM761 549h5v5h-5zM806 549h5v5h-5zM816 549h5v5h-5zM861 549h10v5h-10zM876 549h10v5h-10zM926 549h5v5h-5zM940 549h5v5h-5zM955 549h5v5h-5zM965 549h30v5h-30zM701 554h20v5h-20zM726 554h10v5h-10zM746 554h30v5h-30zM806 554h15v5h-15zM841 554h15v5h-15zM871 554h5v5h-5zM896 549h5v10h-5zM911 549h5v10h-5zM931 554h5v5h-5zM940 554h10v5h-10zM706 559h5v5h-5zM716 559h5v5h-5zM731 559h10v5h-10zM746 559h5v5h-5zM771 559h15v5h-15zM791 559h5v5h-5zM801 559h5v5h-5zM841 559h5v5h-5zM851 559h5v5h-5zM871 559h15v5h-15zM916 559h24v5h-24zM950 559h5v5h-5zM960 554h10v10h-10zM980 559h5v5h-5zM682 554h5v15h-5zM696 564h5v5h-5zM726 564h5v5h-5zM741 564h5v5h-5zM766 564h20v5h-20zM796 564h5v5h-5zM811 564h5v5h-5zM846 564h5v5h-5zM856 564h15v5h-15zM876 564h10v5h-10zM891 559h5v10h-5zM901 559h10v10h-10zM921 564h24v5h-24zM960 564h5v5h-5zM970 564h20v5h-20zM995 554h5v15h-5z"/><path fill="#3f3f3f" d="M746 91h5v5h-5zM791 91h5v5h-5zM980 91h5v5h-5zM731 96h5v5h-5zM796 96h5v5h-5zM816 96h5v5h-5zM846 96h5v5h-5zM940 96h5v5h-5zM950 96h5v5h-5zM716 101h5v5h-5zM751 101h5v5h-5zM791 101h5v5h-5zM841 101h5v5h-5zM901 101h5v5h-5zM701 106h5v5h-5zM731 106h5v5h-5zM811 106h5v5h-5zM886 106h10v5h-10zM936 106h4v5h-4zM965 106h5v5h-5zM771 111h5v5h-5zM851 111h5v5h-5zM896 111h5v5h-5zM955 106h5v10h-5zM766 116h5v5h-5zM786 116h5v5h-5zM846 116h5v5h-5zM856 116h5v5h-5zM876 116h5v5h-5zM786 121h10v5h-10zM965 121h5v5h-5zM726 121h5v10h-5zM736 126h5v5h-5zM746 126h5v5h-5zM786 126h5v5h-5zM781 131h5v5h-5zM791 131h5v5h-5zM806 131h5v5h-5zM856 131h5v5h-5zM871 131h5v5h-5zM881 131h5v5h-5zM891 131h5v5h-5zM945 131h5v5h-5zM990 131h5v5h-5zM741 136h5v5h-5zM816 136h5v5h-5zM886 136h5v5h-5zM950 136h5v5h-5zM985 136h10v5h-10zM716 141h15v5h-15zM806 141h5v5h-5zM901 141h5v5h-5zM965 141h5v5h-5zM711 146h5v5h-5zM811 146h10v5h-10zM926 146h10v5h-10zM955 146h5v5h-5zM970 146h5v5h-5zM706 151h5v5h-5zM985 151h5v5h-5zM726 156h5v5h-5zM791 156h10v5h-10zM841 151h5v10h-5zM1000 91h160v70h-160zM721 161h5v5h-5zM756 161h5v5h-5zM766 161h5v5h-5zM776 161h5v5h-5zM806 161h5v5h-5zM846 161h5v5h-5zM901 161h5v5h-5zM911 161h5v5h-5zM945 161h10v5h-10zM701 166h5v5h-5zM891 166h5v5h-5zM931 166h5v5h-5zM970 166h5v5h-5zM995 161h165v10h-165zM726 171h5v5h-5zM776 171h5v5h-5zM701 176h5v5h-5zM866 176h5v5h-5zM886 176h5v5h-5zM945 176h5v5h-5zM721 181h5v5h-5zM736 181h5v5h-5zM766 176h5v10h-5zM776 181h5v5h-5zM816 181h5v5h-5zM906 181h5v5h-5zM916 181h5v5h-5zM965 181h5v5h-5zM731 186h5v5h-5zM781 186h5v5h-5zM856 186h5v5h-5zM940 186h5v5h-5zM950 181h5v10h-5zM970 186h5v5h-5zM985 186h5v5h-5zM1000 171h160v20h-160zM716 191h5v5h-5zM786 191h5v5h-5zM960 191h5v5h-5zM995 191h165v5h-165zM871 196h5v5h-5zM1000 196h160v5h-160zM771 201h5v5h-5zM781 201h5v5h-5zM861 201h10v5h-10zM876 201h10v5h-10zM896 201h5v5h-5zM975 201h5v5h-5zM995 201h165v5h-165zM716 206h5v5h-5zM776 206h5v5h-5zM786 206h5v5h-5zM806 206h5v5h-5zM881 206h5v5h-5zM906 206h5v5h-5zM950 206h5v5h-5zM960 201h5v10h-5zM721 211h5v5h-5zM751 211h5v5h-5zM771 211h5v5h-5zM846 211h5v5h-5zM861 211h5v5h-5zM940 211h5v5h-5zM716 216h5v5h-5zM856 216h5v5h-5zM965 216h5v5h-5zM985 216h5v5h-5zM706 221h5v5h-5zM746 221h5v5h-5zM756 221h5v5h-5zM766 216h5v10h-5zM781 221h5v5h-5zM796 221h5v5h-5zM906 221h10v5h-10zM721 226h5v5h-5zM806 226h5v5h-5zM921 226h15v5h-15zM746 231h5v5h-5zM761 231h10v5h-10zM786 231h10v5h-10zM811 231h5v5h-5zM856 231h5v5h-5zM881 231h5v5h-5zM906 231h5v5h-5zM926 231h5v5h-5zM990 231h5v5h-5zM721 236h5v4h-5zM741 236h5v4h-5zM871 236h10v4h-10zM891 236h5v4h-5zM916 236h5v4h-5zM975 231h5v9h-5zM801 240h5v5h-5zM856 240h5v5h-5zM881 240h5v5h-5zM901 236h5v9h-5zM955 240h5v5h-5zM965 240h5v5h-5zM746 245h10v5h-10zM786 245h5v5h-5zM911 245h5v5h-5zM1000 206h160v44h-160zM731 250h5v5h-5zM806 250h10v5h-10zM851 250h5v5h-5zM861 250h5v5h-5zM965 250h5v5h-5zM701 255h10v5h-10zM726 255h5v5h-5zM751 255h5v5h-5zM846 255h5v5h-5zM931 255h5v5h-5zM940 255h5v5h-5zM721 260h5v5h-5zM816 260h5v5h-5zM876 260h5v5h-5zM906 250h5v15h-5zM945 260h5v5h-5zM955 260h5v5h-5zM776 265h5v5h-5zM841 265h5v5h-5zM856 265h5v5h-5zM931 265h5v5h-5zM960 265h5v5h-5zM706 270h5v5h-5zM781 270h5v5h-5zM791 270h10v5h-10zM851 270h5v5h-5zM876 270h5v5h-5zM940 270h5v5h-5zM980 270h5v5h-5zM716 275h5v5h-5zM746 275h5v5h-5zM786 275h5v5h-5zM821 275h5v5h-5zM955 275h5v5h-5zM841 280h5v5h-5zM891 280h5v5h-5zM911 280h5v5h-5zM931 280h5v5h-5zM950 280h5v5h-5zM781 285h10v5h-10zM836 285h10v5h-10zM896 285h10v5h-10zM975 280h5v10h-5zM731 290h5v5h-5zM826 290h5v5h-5zM866 290h5v5h-5zM950 290h5v5h-5zM960 290h5v5h-5zM970 290h10v5h-10zM746 290h5v10h-5zM771 295h5v5h-5zM831 295h5v5h-5zM876 295h5v5h-5zM931 295h5v5h-5zM955 295h5v5h-5zM781 300h5v5h-5zM816 300h5v5h-5zM926 300h5v5h-5zM990 300h5v5h-5zM716 305h5v5h-5zM731 305h5v5h-5zM786 305h5v5h-5zM826 305h5v5h-5zM851 305h5v5h-5zM861 305h5v5h-5zM950 305h5v5h-5zM896 310h5v5h-5zM985 310h5v5h-5zM766 315h10v5h-10zM786 315h5v5h-5zM806 315h5v5h-5zM836 315h5v5h-5zM846 315h5v5h-5zM861 315h5v5h-5zM871 315h5v5h-5zM906 315h5v5h-5zM955 310h5v10h-5zM706 320h5v5h-5zM771 320h5v5h-5zM791 320h5v5h-5zM881 320h5v5h-5zM945 315h5v10h-5zM980 320h5v5h-5zM990 320h5v5h-5zM721 325h5v5h-5zM816 325h5v5h-5zM851 325h5v5h-5zM886 325h5v5h-5zM901 325h15v5h-15zM926 325h5v5h-5zM781 330h5v5h-5zM796 330h5v5h-5zM881 330h5v5h-5zM940 330h5v5h-5zM985 330h5v5h-5zM871 335h5v5h-5zM901 335h5v5h-5zM911 335h5v5h-5zM970 330h5v10h-5zM736 340h5v5h-5zM781 340h5v5h-5zM831 340h5v5h-5zM876 340h5v5h-5zM906 340h5v5h-5zM940 340h5v5h-5zM950 340h5v5h-5zM711 345h5v5h-5zM721 345h5v5h-5zM806 345h10v5h-10zM821 335h5v15h-5zM995 345h5v5h-5zM701 350h5v5h-5zM776 345h5v10h-5zM786 350h5v5h-5zM950 350h5v5h-5zM736 355h5v5h-5zM811 355h5v5h-5zM821 355h5v5h-5zM831 355h5v5h-5zM851 355h5v5h-5zM861 350h5v10h-5zM906 355h5v5h-5zM936 355h4v5h-4zM975 355h5v5h-5zM995 355h5v5h-5zM756 360h5v5h-5zM816 360h5v5h-5zM846 360h5v5h-5zM856 360h5v5h-5zM891 360h5v5h-5zM950 360h5v5h-5zM965 360h10v5h-10zM711 365h5v5h-5zM796 365h5v5h-5zM940 365h5v5h-5zM806 370h5v5h-5zM841 370h5v5h-5zM975 370h5v5h-5zM706 375h5v5h-5zM736 365h5v15h-5zM746 370h5v10h-5zM771 375h10v5h-10zM786 375h5v5h-5zM796 375h5v5h-5zM836 375h5v5h-5zM891 375h5v5h-5zM945 375h5v5h-5zM756 380h5v5h-5zM906 380h5v5h-5zM936 380h4v5h-4zM995 370h5v15h-5zM721 385h5v5h-5zM736 385h5v5h-5zM776 385h5v5h-5zM816 385h5v5h-5zM851 385h5v5h-5zM871 385h5v5h-5zM896 385h5v5h-5zM716 390h5v5h-5zM831 390h5v5h-5zM901 390h10v5h-10zM926 390h5v5h-5zM990 390h5v5h-5zM736 395h10v5h-10zM836 395h5v5h-5zM851 395h10v5h-10zM876 395h5v5h-5zM886 395h5v5h-5zM960 395h5v5h-5zM706 400h5v5h-5zM726 400h5v5h-5zM786 400h5v5h-5zM816 400h5v5h-5zM721 405h5v5h-5zM731 405h5v5h-5zM741 405h5v5h-5zM846 405h5v5h-5zM960 405h5v5h-5zM975 405h5v5h-5zM1160 250h25v160h-25zM771 405h5v10h-5zM781 410h5v5h-5zM811 410h5v5h-5zM970 410h5v5h-5zM980 410h5v5h-5zM682 415h5v5h-5zM791 415h5v5h-5zM856 415h5v5h-5zM931 415h5v5h-5zM965 415h5v5h-5zM975 415h5v5h-5zM687 420h4v5h-4zM716 420h5v5h-5zM731 420h5v5h-5zM776 420h5v5h-5zM796 420h5v5h-5zM940 420h5v5h-5zM766 425h5v5h-5zM811 425h5v5h-5zM1000 410h160v20h-160zM701 430h5v5h-5zM886 430h5v5h-5zM926 430h5v5h-5zM995 430h165v5h-165zM791 435h5v5h-5zM940 435h5v5h-5zM682 440h9v5h-9zM781 440h5v5h-5zM816 440h5v5h-5zM846 440h5v5h-5zM921 440h5v5h-5zM936 440h4v5h-4zM980 440h5v5h-5zM682 445h5v5h-5zM691 445h15v5h-15zM736 445h5v5h-5zM766 445h5v5h-5zM861 440h5v10h-5zM871 445h5v5h-5zM886 445h5v5h-5zM906 440h5v10h-5zM926 445h5v5h-5zM965 445h5v5h-5zM1000 435h160v15h-160zM687 450h4v5h-4zM721 450h5v5h-5zM746 450h5v5h-5zM846 450h5v5h-5zM866 450h10v5h-10zM995 450h165v5h-165zM716 455h10v5h-10zM955 455h5v5h-5zM970 455h5v5h-5zM990 455h5v5h-5zM721 460h5v5h-5zM771 460h5v5h-5zM806 460h5v5h-5zM876 460h5v5h-5zM896 460h5v5h-5zM960 460h5v5h-5zM975 460h5v5h-5zM985 460h5v5h-5zM687 465h4v5h-4zM701 465h5v5h-5zM891 465h5v5h-5zM696 470h5v5h-5zM721 470h5v5h-5zM736 470h5v5h-5zM776 470h5v5h-5zM791 470h5v5h-5zM936 470h4v5h-4zM975 470h5v5h-5zM841 475h5v5h-5zM861 475h5v5h-5zM871 470h5v10h-5zM901 475h5v5h-5zM916 475h5v5h-5zM945 475h5v5h-5zM955 475h5v5h-5zM1000 455h160v25h-160zM711 480h5v5h-5zM891 480h5v5h-5zM906 480h5v5h-5zM965 480h5v5h-5zM975 480h5v5h-5zM995 480h165v5h-165zM696 485h5v4h-5zM816 485h5v4h-5zM911 485h5v4h-5zM955 485h5v4h-5zM970 485h5v4h-5zM731 485h5v9h-5zM761 489h5v5h-5zM841 489h5v5h-5zM936 489h4v5h-4zM801 494h5v5h-5zM816 494h5v5h-5zM856 494h5v5h-5zM871 494h5v5h-5zM881 494h5v5h-5zM696 499h5v5h-5zM906 499h15v5h-15zM955 499h10v5h-10zM970 499h10v5h-10zM687 504h4v5h-4zM786 504h10v5h-10zM866 504h5v5h-5zM886 504h5v5h-5zM965 504h5v5h-5zM786 509h5v5h-5zM856 509h5v5h-5zM926 509h5v5h-5zM776 509h5v10h-5zM806 514h5v5h-5zM851 514h5v5h-5zM861 514h5v5h-5zM876 514h5v5h-5zM886 514h5v5h-5zM901 514h5v5h-5zM911 514h5v5h-5zM965 514h15v5h-15zM682 519h5v5h-5zM706 519h5v5h-5zM721 519h5v5h-5zM771 519h5v5h-5zM881 519h5v5h-5zM975 519h5v5h-5zM691 524h5v5h-5zM756 524h5v5h-5zM806 524h5v5h-5zM816 524h5v5h-5zM926 524h10v5h-10zM781 529h5v5h-5zM801 529h5v5h-5zM841 529h5v5h-5zM881 529h5v5h-5zM776 534h5v5h-5zM811 534h5v5h-5zM856 529h5v10h-5zM886 534h5v5h-5zM911 534h5v5h-5zM990 534h5v5h-5zM691 539h5v5h-5zM726 539h5v5h-5zM851 539h5v5h-5zM866 539h5v5h-5zM926 539h5v5h-5zM761 544h5v5h-5zM786 544h10v5h-10zM886 544h5v5h-5zM896 544h5v5h-5zM936 544h4v5h-4zM696 549h5v5h-5zM706 549h5v5h-5zM811 549h5v5h-5zM906 549h5v5h-5zM687 554h4v5h-4zM776 554h5v5h-5zM791 549h5v10h-5zM881 554h5v5h-5zM901 554h5v5h-5zM916 554h15v5h-15zM970 554h5v5h-5zM980 554h5v5h-5zM741 559h5v5h-5zM896 559h5v5h-5zM911 559h5v5h-5zM970 559h10v5h-10zM687 564h9v5h-9zM716 564h5v5h-5zM731 564h10v5h-10zM786 564h10v5h-10zM871 564h5v5h-5zM916 564h5v5h-5zM1000 485h160v84h-160zM203 569h160v160h-160zM522 569h160v160h-160zM841 569h159v160h-159zM1160 569h25v160h-25zM44 729h159v33h-159zM363 729h159v33h-159zM682 729h159v33h-159zM1000 729h160v33h-160z"/><path fill="#cecece" d="M756 91h10v5h-10zM761 96h5v5h-5zM761 106h5v5h-5zM756 111h10v20h-10zM761 131h5v15h-5zM756 146h10v5h-10zM761 151h5v5h-5zM756 156h10v5h-10zM761 171h5v5h-5zM756 181h10v10h-10zM761 191h5v15h-5zM756 211h10v10h-10zM761 226h5v5h-5zM756 231h5v5h-5zM761 236h5v4h-5zM756 240h10v5h-10zM756 245h5v5h-5zM756 250h10v5h-10zM761 255h5v5h-5zM756 260h10v10h-10zM761 270h5v10h-5zM761 285h5v5h-5zM756 290h10v10h-10zM761 300h5v10h-5zM756 310h10v5h-10zM756 315h5v10h-5zM756 325h10v5h-10zM761 330h5v5h-5zM761 340h5v5h-5zM756 345h10v5h-10zM761 350h5v5h-5zM756 355h10v5h-10zM761 360h5v10h-5zM756 370h10v5h-10zM761 380h5v5h-5zM756 385h10v5h-10zM756 390h5v15h-5zM756 405h10v15h-10zM756 425h10v5h-10zM756 430h5v10h-5zM756 440h10v5h-10zM761 445h5v5h-5zM756 450h10v5h-10zM756 455h5v15h-5zM756 470h10v10h-10zM761 480h5v5h-5zM756 499h10v5h-10zM761 509h5v5h-5zM756 514h10v5h-10zM761 519h5v15h-5zM756 534h10v5h-10zM756 544h5v10h-5zM756 559h5v5h-5zM756 564h10v5h-10z"/><path fill="#363636" d="M766 91h5v5h-5zM781 91h5v5h-5zM931 91h5v5h-5zM726 96h5v5h-5zM851 96h5v5h-5zM911 96h5v5h-5zM756 101h5v5h-5zM806 101h5v5h-5zM896 101h5v5h-5zM960 101h5v5h-5zM970 101h15v5h-15zM771 106h5v5h-5zM786 106h5v5h-5zM861 106h5v5h-5zM876 106h5v5h-5zM816 111h5v5h-5zM846 111h5v5h-5zM926 111h5v5h-5zM936 111h4v5h-4zM950 111h5v5h-5zM726 116h5v5h-5zM990 116h5v5h-5zM716 116h5v10h-5zM841 121h5v5h-5zM856 121h5v5h-5zM980 121h5v5h-5zM886 126h5v5h-5zM701 131h10v5h-10zM726 131h5v5h-5zM746 131h5v5h-5zM911 131h5v5h-5zM955 131h5v5h-5zM985 131h5v5h-5zM771 131h5v10h-5zM931 136h5v5h-5zM980 136h5v5h-5zM731 141h5v5h-5zM891 141h5v5h-5zM701 146h5v5h-5zM736 146h5v5h-5zM766 146h5v5h-5zM786 146h5v5h-5zM846 146h5v5h-5zM901 146h5v5h-5zM911 146h5v5h-5zM721 151h5v5h-5zM791 151h10v5h-10zM926 151h5v5h-5zM746 156h5v5h-5zM771 151h5v10h-5zM861 156h5v5h-5zM726 161h5v5h-5zM866 161h5v5h-5zM881 161h10v5h-10zM881 166h5v5h-5zM896 166h5v5h-5zM926 166h5v5h-5zM945 166h5v5h-5zM716 171h5v5h-5zM786 171h5v5h-5zM866 171h5v5h-5zM995 171h5v5h-5zM751 176h5v5h-5zM811 171h5v10h-5zM990 176h5v5h-5zM706 181h5v5h-5zM926 181h5v5h-5zM721 186h5v5h-5zM816 186h5v5h-5zM866 186h5v5h-5zM846 191h5v5h-5zM861 191h5v5h-5zM776 196h5v5h-5zM806 196h5v5h-5zM886 196h5v5h-5zM980 196h5v5h-5zM726 201h5v5h-5zM856 206h5v5h-5zM866 206h5v5h-5zM985 206h5v5h-5zM906 211h5v5h-5zM965 211h10v5h-10zM706 216h5v5h-5zM796 216h5v5h-5zM806 216h5v5h-5zM931 216h5v5h-5zM955 216h5v5h-5zM980 216h5v10h-5zM716 226h5v5h-5zM751 226h5v5h-5zM766 226h5v5h-5zM816 226h5v5h-5zM846 226h5v5h-5zM866 226h5v5h-5zM891 226h10v5h-10zM955 226h5v5h-5zM975 226h5v5h-5zM965 231h10v5h-10zM886 240h5v5h-5zM916 240h5v5h-5zM945 240h5v5h-5zM980 240h10v5h-10zM721 240h5v10h-5zM731 245h5v5h-5zM811 245h5v5h-5zM841 245h5v5h-5zM706 250h5v5h-5zM771 250h5v5h-5zM886 250h5v5h-5zM711 255h5v5h-5zM806 255h5v5h-5zM851 255h5v5h-5zM871 255h5v5h-5zM901 255h5v5h-5zM936 255h4v5h-4zM995 255h5v5h-5zM766 255h5v10h-5zM940 260h5v5h-5zM975 260h5v5h-5zM985 260h5v5h-5zM731 265h5v5h-5zM886 265h5v5h-5zM896 265h5v5h-5zM771 275h5v5h-5zM861 275h5v5h-5zM940 275h5v5h-5zM781 280h5v5h-5zM801 280h5v5h-5zM856 280h5v5h-5zM746 285h5v5h-5zM891 285h5v5h-5zM906 285h10v5h-10zM950 285h5v5h-5zM881 290h5v5h-5zM851 290h5v10h-5zM706 295h5v10h-5zM756 300h5v5h-5zM821 300h5v5h-5zM886 300h5v5h-5zM980 300h5v5h-5zM806 305h5v5h-5zM960 305h5v5h-5zM766 310h5v5h-5zM786 310h5v5h-5zM821 310h5v5h-5zM871 310h5v5h-5zM746 315h5v5h-5zM896 315h5v5h-5zM960 315h5v5h-5zM786 320h5v5h-5zM876 315h5v10h-5zM906 320h5v5h-5zM931 320h5v5h-5zM706 325h5v5h-5zM736 325h5v5h-5zM985 325h5v5h-5zM891 330h5v5h-5zM811 335h5v5h-5zM846 335h5v5h-5zM726 340h5v5h-5zM856 340h5v5h-5zM965 340h5v5h-5zM726 345h10v5h-10zM836 345h5v5h-5zM846 345h5v5h-5zM985 345h5v5h-5zM796 350h5v5h-5zM911 350h5v5h-5zM960 350h5v5h-5zM706 355h10v5h-10zM791 355h5v5h-5zM816 355h5v5h-5zM891 355h5v5h-5zM970 355h5v5h-5zM831 360h5v5h-5zM871 355h5v10h-5zM881 355h5v10h-5zM995 360h5v5h-5zM726 365h5v5h-5zM791 365h5v5h-5zM861 365h5v5h-5zM886 365h5v5h-5zM980 365h10v5h-10zM721 370h5v5h-5zM856 370h5v5h-5zM940 370h5v5h-5zM866 375h5v5h-5zM771 380h5v5h-5zM781 380h5v5h-5zM891 380h5v5h-5zM901 380h5v5h-5zM970 380h5v5h-5zM716 385h5v5h-5zM786 385h10v5h-10zM736 390h5v5h-5zM781 390h5v5h-5zM806 390h5v5h-5zM821 390h5v5h-5zM861 390h5v5h-5zM711 395h5v5h-5zM896 395h5v5h-5zM940 395h5v5h-5zM950 395h5v5h-5zM965 395h5v5h-5zM751 400h5v5h-5zM776 395h5v10h-5zM796 400h5v5h-5zM836 400h5v5h-5zM901 400h5v5h-5zM970 400h5v5h-5zM711 405h5v5h-5zM811 405h5v5h-5zM856 405h5v5h-5zM741 410h5v5h-5zM791 410h5v5h-5zM881 410h5v5h-5zM960 410h5v5h-5zM726 415h5v5h-5zM746 415h5v5h-5zM766 415h5v5h-5zM776 410h5v10h-5zM801 415h5v5h-5zM816 415h5v5h-5zM906 415h5v5h-5zM980 415h5v5h-5zM990 415h5v5h-5zM711 420h5v5h-5zM781 420h5v5h-5zM921 420h5v5h-5zM936 420h4v5h-4zM701 425h5v5h-5zM786 425h5v5h-5zM901 420h5v10h-5zM936 430h4v5h-4zM990 430h5v5h-5zM796 435h5v5h-5zM896 435h5v5h-5zM980 435h5v5h-5zM696 440h5v5h-5zM736 440h5v5h-5zM771 440h5v5h-5zM851 440h5v5h-5zM945 440h5v5h-5zM711 445h5v5h-5zM846 445h5v5h-5zM950 445h5v5h-5zM726 450h5v5h-5zM796 450h10v5h-10zM886 450h5v5h-5zM731 455h5v5h-5zM776 455h5v5h-5zM866 455h5v5h-5zM876 450h5v10h-5zM916 455h5v5h-5zM706 460h5v5h-5zM746 460h5v5h-5zM965 460h5v5h-5zM716 465h5v5h-5zM776 465h5v5h-5zM786 465h5v5h-5zM811 465h10v5h-10zM911 465h5v5h-5zM687 470h9v5h-9zM741 470h5v5h-5zM801 470h5v5h-5zM841 470h5v5h-5zM940 470h10v5h-10zM985 470h5v5h-5zM701 475h5v5h-5zM796 475h5v5h-5zM881 475h5v5h-5zM950 475h5v5h-5zM721 480h10v5h-10zM741 480h5v5h-5zM791 480h5v5h-5zM806 480h5v5h-5zM846 480h5v5h-5zM856 480h5v5h-5zM911 480h5v5h-5zM940 480h5v5h-5zM687 485h4v4h-4zM711 485h5v4h-5zM736 485h5v4h-5zM771 485h15v4h-15zM876 489h5v5h-5zM931 489h5v5h-5zM980 489h5v5h-5zM706 489h5v10h-5zM776 494h5v5h-5zM861 494h5v5h-5zM891 494h5v5h-5zM901 494h5v5h-5zM846 499h5v5h-5zM876 504h5v5h-5zM936 499h4v10h-4zM687 509h4v5h-4zM751 509h5v5h-5zM871 509h5v5h-5zM950 509h5v5h-5zM980 514h5v5h-5zM756 519h5v5h-5zM801 514h5v10h-5zM721 524h5v5h-5zM711 529h5v5h-5zM736 529h5v5h-5zM756 529h5v5h-5zM861 529h5v5h-5zM687 534h4v5h-4zM741 534h5v5h-5zM851 534h5v5h-5zM711 539h5v5h-5zM861 539h5v5h-5zM871 539h10v5h-10zM901 539h5v5h-5zM736 544h10v5h-10zM751 544h5v5h-5zM781 544h5v5h-5zM950 544h5v5h-5zM682 544h5v10h-5zM691 549h5v5h-5zM851 549h5v5h-5zM931 549h9v5h-9zM960 549h5v5h-5zM995 549h5v5h-5zM741 554h5v5h-5zM786 554h5v5h-5zM990 554h5v5h-5zM696 559h5v5h-5zM726 559h5v5h-5zM811 559h5v5h-5zM866 559h5v5h-5zM886 554h5v10h-5zM985 559h5v5h-5zM721 564h5v5h-5z"/><path fill="#3c3c3c" d="M771 91h5v5h-5zM816 91h5v5h-5zM861 91h5v5h-5zM876 91h5v5h-5zM891 91h10v5h-10zM921 91h5v5h-5zM965 91h15v5h-15zM990 91h10v5h-10zM706 96h5v5h-5zM716 96h10v5h-10zM746 96h5v5h-5zM776 96h5v5h-5zM881 96h5v5h-5zM906 91h5v10h-5zM916 96h5v5h-5zM926 96h10v5h-10zM945 91h5v10h-5zM975 96h5v5h-5zM721 101h5v5h-5zM846 101h5v5h-5zM876 101h5v5h-5zM891 101h5v5h-5zM906 101h15v5h-15zM955 96h5v10h-5zM711 106h10v5h-10zM726 106h5v5h-5zM736 106h10v5h-10zM756 106h5v5h-5zM791 106h5v5h-5zM816 106h5v5h-5zM866 101h5v10h-5zM950 106h5v5h-5zM701 111h10v5h-10zM721 111h10v5h-10zM736 111h5v5h-5zM751 111h5v5h-5zM766 106h5v10h-5zM781 111h5v5h-5zM796 111h5v5h-5zM841 111h5v5h-5zM886 111h10v5h-10zM906 111h10v5h-10zM990 111h5v5h-5zM701 116h5v5h-5zM721 116h5v5h-5zM746 116h5v5h-5zM771 116h5v5h-5zM791 116h10v5h-10zM811 116h5v5h-5zM871 116h5v5h-5zM931 116h5v5h-5zM970 116h10v5h-10zM711 121h5v5h-5zM731 121h10v5h-10zM766 121h5v5h-5zM796 121h5v5h-5zM950 121h15v5h-15zM990 121h10v5h-10zM701 126h10v5h-10zM731 126h5v5h-5zM741 126h5v5h-5zM751 126h5v5h-5zM791 126h20v5h-20zM841 126h5v5h-5zM851 126h5v5h-5zM871 126h5v5h-5zM881 126h5v5h-5zM906 126h15v5h-15zM940 121h5v10h-5zM950 126h5v5h-5zM970 126h15v5h-15zM721 131h5v5h-5zM756 131h5v5h-5zM796 131h5v5h-5zM866 131h5v5h-5zM886 131h5v5h-5zM916 131h5v5h-5zM995 131h5v5h-5zM711 136h5v5h-5zM721 136h10v5h-10zM766 136h5v5h-5zM781 136h5v5h-5zM791 136h5v5h-5zM881 136h5v5h-5zM891 136h5v5h-5zM701 136h5v10h-5zM756 141h5v5h-5zM766 141h15v5h-15zM786 141h5v5h-5zM796 141h5v5h-5zM811 141h5v5h-5zM856 141h5v5h-5zM871 141h5v5h-5zM896 141h5v5h-5zM926 141h5v5h-5zM945 136h5v10h-5zM960 141h5v5h-5zM990 141h5v5h-5zM851 146h5v5h-5zM861 146h5v5h-5zM985 146h10v5h-10zM726 146h5v10h-5zM736 151h5v5h-5zM756 151h5v5h-5zM846 151h10v5h-10zM871 151h5v5h-5zM886 151h5v5h-5zM906 151h5v5h-5zM970 151h15v5h-15zM990 151h5v5h-5zM701 151h5v10h-5zM731 156h5v5h-5zM766 151h5v10h-5zM786 156h5v5h-5zM856 156h5v5h-5zM871 156h10v5h-10zM906 156h10v5h-10zM950 151h5v10h-5zM975 156h10v5h-10zM995 156h5v5h-5zM706 161h5v5h-5zM741 161h5v5h-5zM796 161h10v5h-10zM816 161h5v5h-5zM861 161h5v5h-5zM931 156h5v10h-5zM990 161h5v5h-5zM711 166h15v5h-15zM746 166h5v5h-5zM766 166h5v5h-5zM781 166h10v5h-10zM851 166h10v5h-10zM901 166h10v5h-10zM940 166h5v5h-5zM960 166h5v5h-5zM721 171h5v5h-5zM736 166h5v10h-5zM751 171h5v5h-5zM766 171h10v5h-10zM791 171h5v5h-5zM801 171h5v5h-5zM816 171h5v5h-5zM851 171h5v5h-5zM861 171h5v5h-5zM931 171h5v5h-5zM965 171h10v5h-10zM980 166h5v10h-5zM706 176h5v5h-5zM726 176h10v5h-10zM741 176h5v5h-5zM756 176h5v5h-5zM796 176h5v5h-5zM841 166h5v15h-5zM871 171h10v10h-10zM891 176h5v5h-5zM901 171h5v10h-5zM936 176h9v5h-9zM950 176h5v5h-5zM960 176h5v5h-5zM985 176h5v5h-5zM701 181h5v5h-5zM711 181h5v5h-5zM741 181h15v5h-15zM771 181h5v5h-5zM786 181h10v5h-10zM806 176h5v10h-5zM861 181h20v5h-20zM886 181h5v5h-5zM896 181h10v5h-10zM955 181h10v5h-10zM970 176h5v10h-5zM990 181h5v5h-5zM706 186h5v5h-5zM736 186h5v5h-5zM766 186h5v5h-5zM791 186h5v5h-5zM811 186h5v5h-5zM881 186h5v5h-5zM896 186h5v5h-5zM906 186h20v5h-20zM721 191h10v5h-10zM741 191h10v5h-10zM781 191h5v5h-5zM866 191h10v5h-10zM886 191h5v5h-5zM931 191h5v5h-5zM945 191h5v5h-5zM970 191h10v5h-10zM990 191h5v5h-5zM701 196h5v5h-5zM731 196h15v5h-15zM771 196h5v5h-5zM786 196h10v5h-10zM846 196h5v5h-5zM856 196h5v5h-5zM866 196h5v5h-5zM896 196h5v5h-5zM906 196h5v5h-5zM955 191h5v10h-5zM975 196h5v5h-5zM995 196h5v5h-5zM701 201h10v5h-10zM716 196h5v10h-5zM736 201h15v5h-15zM816 201h5v5h-5zM886 201h5v5h-5zM901 201h5v5h-5zM921 201h5v5h-5zM965 201h5v5h-5zM980 201h15v5h-15zM706 206h5v5h-5zM721 206h5v5h-5zM796 206h10v5h-10zM846 201h10v10h-10zM891 206h10v5h-10zM926 206h5v5h-5zM945 201h5v10h-5zM990 206h10v5h-10zM701 211h10v5h-10zM716 211h5v5h-5zM766 211h5v5h-5zM776 211h30v5h-30zM841 211h5v5h-5zM851 211h5v5h-5zM866 211h10v5h-10zM901 211h5v5h-5zM931 211h9v5h-9zM731 216h5v5h-5zM741 216h5v5h-5zM781 216h10v5h-10zM811 211h5v10h-5zM846 216h5v5h-5zM876 216h5v5h-5zM886 216h5v5h-5zM896 216h5v5h-5zM906 216h10v5h-10zM936 216h9v5h-9zM960 211h5v10h-5zM975 216h5v5h-5zM990 211h5v10h-5zM701 221h5v5h-5zM711 221h5v5h-5zM736 221h10v5h-10zM761 221h5v5h-5zM771 216h5v10h-5zM786 221h10v5h-10zM811 221h10v5h-10zM841 221h10v5h-10zM866 221h10v5h-10zM886 221h10v5h-10zM901 221h5v5h-5zM926 216h5v10h-5zM945 221h5v5h-5zM955 221h5v5h-5zM995 221h5v5h-5zM741 226h5v5h-5zM756 226h5v5h-5zM801 226h5v5h-5zM856 226h10v5h-10zM871 226h5v5h-5zM940 226h15v5h-15zM970 226h5v5h-5zM980 226h5v5h-5zM990 226h10v5h-10zM721 231h5v5h-5zM731 226h5v10h-5zM796 231h5v5h-5zM841 231h10v5h-10zM931 231h5v5h-5zM701 236h5v4h-5zM751 236h5v4h-5zM766 236h10v4h-10zM811 236h10v4h-10zM841 236h5v4h-5zM861 236h5v4h-5zM936 236h4v4h-4zM965 236h10v4h-10zM985 236h5v4h-5zM995 236h5v4h-5zM746 240h5v5h-5zM776 240h10v5h-10zM806 240h5v5h-5zM851 236h5v9h-5zM866 240h10v5h-10zM960 240h5v5h-5zM726 245h5v5h-5zM736 245h10v5h-10zM761 245h5v5h-5zM771 245h5v5h-5zM791 236h5v14h-5zM916 245h15v5h-15zM936 245h4v5h-4zM950 240h5v10h-5zM985 245h5v5h-5zM716 250h5v5h-5zM776 250h5v5h-5zM796 250h10v5h-10zM821 250h15v5h-15zM841 250h10v5h-10zM871 250h10v5h-10zM891 250h5v5h-5zM901 250h5v5h-5zM911 250h5v5h-5zM931 250h5v5h-5zM945 250h5v5h-5zM960 250h5v5h-5zM995 250h5v5h-5zM741 255h5v5h-5zM756 255h5v5h-5zM781 255h5v5h-5zM796 255h5v5h-5zM811 255h5v5h-5zM836 255h10v5h-10zM866 255h5v5h-5zM886 255h5v5h-5zM980 255h10v5h-10zM726 260h10v5h-10zM746 260h5v5h-5zM771 260h5v5h-5zM791 260h5v5h-5zM821 260h10v5h-10zM841 260h5v5h-5zM851 260h5v5h-5zM881 260h5v5h-5zM911 260h5v5h-5zM926 255h5v10h-5zM960 260h5v5h-5zM970 260h5v5h-5zM706 260h5v10h-5zM741 265h5v5h-5zM811 265h5v5h-5zM826 265h5v5h-5zM876 265h5v5h-5zM936 265h4v5h-4zM950 265h5v5h-5zM995 265h5v5h-5zM716 270h5v5h-5zM726 270h5v5h-5zM766 270h5v5h-5zM786 270h5v5h-5zM816 270h10v5h-10zM836 270h10v5h-10zM861 265h5v10h-5zM881 270h10v5h-10zM931 270h5v5h-5zM945 270h10v5h-10zM706 275h5v5h-5zM721 275h5v5h-5zM731 275h5v5h-5zM741 275h5v5h-5zM776 275h10v5h-10zM791 275h5v5h-5zM831 275h5v5h-5zM841 275h10v5h-10zM866 275h5v5h-5zM911 275h5v5h-5zM975 275h5v5h-5zM985 265h5v15h-5zM995 275h5v5h-5zM736 280h5v5h-5zM786 280h5v5h-5zM796 280h5v5h-5zM846 280h10v5h-10zM886 280h5v5h-5zM906 280h5v5h-5zM926 280h5v5h-5zM936 280h4v5h-4zM965 270h5v15h-5zM990 280h10v5h-10zM721 285h5v5h-5zM731 285h5v5h-5zM771 285h5v5h-5zM791 285h5v5h-5zM806 275h5v15h-5zM831 285h5v5h-5zM861 280h5v10h-5zM931 285h9v5h-9zM945 285h5v5h-5zM960 285h5v5h-5zM990 285h5v5h-5zM786 290h5v5h-5zM801 290h5v5h-5zM831 290h15v5h-15zM856 290h5v5h-5zM886 290h10v5h-10zM901 290h5v5h-5zM926 290h5v5h-5zM940 290h5v5h-5zM955 290h5v5h-5zM965 290h5v5h-5zM995 290h5v5h-5zM701 295h5v5h-5zM711 290h5v10h-5zM736 295h5v5h-5zM751 295h5v5h-5zM776 290h5v10h-5zM796 295h5v5h-5zM806 295h5v5h-5zM816 295h5v5h-5zM841 295h10v5h-10zM881 295h5v5h-5zM896 295h10v5h-10zM936 295h4v5h-4zM960 295h5v5h-5zM985 290h5v10h-5zM721 295h5v10h-5zM746 300h5v5h-5zM771 300h10v5h-10zM786 300h15v5h-15zM826 300h5v5h-5zM836 300h10v5h-10zM851 300h5v5h-5zM861 300h5v5h-5zM940 300h5v5h-5zM995 300h5v5h-5zM706 305h5v5h-5zM781 305h5v5h-5zM791 305h5v5h-5zM801 305h5v5h-5zM811 300h5v10h-5zM821 305h5v5h-5zM856 305h5v5h-5zM876 305h10v5h-10zM955 305h5v5h-5zM970 300h10v10h-10zM706 310h20v5h-20zM731 310h5v5h-5zM741 310h15v5h-15zM806 310h10v5h-10zM861 310h5v5h-5zM891 305h5v10h-5zM911 310h5v5h-5zM940 310h5v5h-5zM965 310h5v5h-5zM975 310h5v5h-5zM995 310h5v5h-5zM731 315h10v5h-10zM781 315h5v5h-5zM816 315h10v5h-10zM831 310h5v10h-5zM856 315h5v5h-5zM931 305h5v15h-5zM950 315h5v5h-5zM975 315h10v5h-10zM736 320h5v5h-5zM746 320h5v5h-5zM796 320h5v5h-5zM836 320h5v5h-5zM851 320h10v5h-10zM886 320h5v5h-5zM940 320h5v5h-5zM955 320h5v5h-5zM985 320h5v5h-5zM716 325h5v5h-5zM731 325h5v5h-5zM746 325h10v5h-10zM776 325h10v5h-10zM806 325h5v5h-5zM826 325h5v5h-5zM871 320h5v10h-5zM931 325h5v5h-5zM960 325h5v5h-5zM990 325h5v5h-5zM701 330h5v5h-5zM791 325h5v10h-5zM811 330h10v5h-10zM841 330h5v5h-5zM856 330h10v5h-10zM896 325h5v10h-5zM945 330h5v5h-5zM955 330h5v5h-5zM711 335h20v5h-20zM746 330h5v10h-5zM761 335h10v5h-10zM776 335h10v5h-10zM796 335h5v5h-5zM806 335h5v5h-5zM816 335h5v5h-5zM876 330h5v10h-5zM906 330h5v10h-5zM950 335h5v5h-5zM975 335h5v5h-5zM706 340h15v5h-15zM771 340h5v5h-5zM786 340h10v5h-10zM801 340h10v5h-10zM866 340h5v5h-5zM881 340h5v5h-5zM896 340h5v5h-5zM931 340h5v5h-5zM960 335h5v10h-5zM985 340h5v5h-5zM701 345h5v5h-5zM751 340h5v10h-5zM781 345h5v5h-5zM831 345h5v5h-5zM851 340h5v10h-5zM876 345h5v5h-5zM886 345h5v5h-5zM901 345h5v5h-5zM911 345h5v5h-5zM945 345h5v5h-5zM955 345h5v5h-5zM970 345h5v5h-5zM806 350h15v5h-15zM871 350h5v5h-5zM881 350h15v5h-15zM906 350h5v5h-5zM926 350h10v5h-10zM940 350h5v5h-5zM985 350h10v5h-10zM716 355h5v5h-5zM741 355h10v5h-10zM766 355h5v5h-5zM776 355h5v5h-5zM796 355h10v5h-10zM826 350h5v10h-5zM836 355h10v5h-10zM856 355h5v5h-5zM896 355h5v5h-5zM940 355h10v5h-10zM955 355h15v5h-15zM990 355h5v5h-5zM721 360h5v5h-5zM731 355h5v10h-5zM781 360h5v5h-5zM791 360h10v5h-10zM806 360h5v5h-5zM851 360h5v5h-5zM926 360h5v5h-5zM945 360h5v5h-5zM975 360h5v5h-5zM985 360h5v5h-5zM706 365h5v5h-5zM741 365h10v5h-10zM756 365h5v5h-5zM766 365h10v5h-10zM806 365h10v5h-10zM826 365h10v5h-10zM841 365h5v5h-5zM866 365h15v5h-15zM891 365h10v5h-10zM950 365h5v5h-5zM751 370h5v5h-5zM771 370h5v5h-5zM781 370h15v5h-15zM821 370h5v5h-5zM846 370h5v5h-5zM881 370h10v5h-10zM896 370h5v5h-5zM911 365h5v10h-5zM926 370h10v5h-10zM945 370h5v5h-5zM990 370h5v5h-5zM711 375h10v5h-10zM726 375h5v5h-5zM741 375h5v5h-5zM756 375h10v5h-10zM781 375h5v5h-5zM791 375h5v5h-5zM806 375h15v5h-15zM831 370h5v10h-5zM861 375h5v5h-5zM871 375h5v5h-5zM881 375h5v5h-5zM906 375h5v5h-5zM931 375h9v5h-9zM960 370h5v10h-5zM975 375h5v5h-5zM985 375h5v5h-5zM721 380h15v5h-15zM746 380h5v5h-5zM766 380h5v5h-5zM806 380h10v5h-10zM846 380h5v5h-5zM866 380h5v5h-5zM881 380h10v5h-10zM896 380h5v5h-5zM911 380h5v5h-5zM940 380h10v5h-10zM965 380h5v5h-5zM706 385h5v5h-5zM726 385h5v5h-5zM781 385h5v5h-5zM801 385h5v5h-5zM811 385h5v5h-5zM836 385h5v5h-5zM856 385h5v5h-5zM891 385h5v5h-5zM906 385h5v5h-5zM936 385h4v5h-4zM955 385h15v5h-15zM701 390h5v5h-5zM721 390h5v5h-5zM751 385h5v10h-5zM761 390h10v5h-10zM786 390h5v5h-5zM816 390h5v5h-5zM826 390h5v5h-5zM851 390h5v5h-5zM866 390h5v5h-5zM876 390h5v5h-5zM896 390h5v5h-5zM936 390h14v5h-14zM980 385h5v10h-5zM995 390h5v5h-5zM731 395h5v5h-5zM761 395h5v5h-5zM771 395h5v5h-5zM781 395h5v5h-5zM801 395h10v5h-10zM826 395h10v5h-10zM841 395h10v5h-10zM861 395h5v5h-5zM871 395h5v5h-5zM906 395h5v5h-5zM945 395h5v5h-5zM955 395h5v5h-5zM970 395h5v5h-5zM711 400h5v5h-5zM736 400h5v5h-5zM766 400h5v5h-5zM791 400h5v5h-5zM831 400h5v5h-5zM851 400h20v5h-20zM886 400h5v5h-5zM906 400h10v5h-10zM926 400h5v5h-5zM975 400h5v5h-5zM985 400h5v5h-5zM701 400h5v10h-5zM746 405h10v5h-10zM781 405h15v5h-15zM821 405h10v5h-10zM876 405h5v5h-5zM906 405h5v5h-5zM950 405h5v5h-5zM970 405h5v5h-5zM687 410h4v5h-4zM746 410h5v5h-5zM766 410h5v5h-5zM841 410h5v5h-5zM901 410h5v5h-5zM921 410h5v5h-5zM940 410h10v5h-10zM955 410h5v5h-5zM965 410h5v5h-5zM995 410h5v5h-5zM716 415h10v5h-10zM736 415h5v5h-5zM781 415h5v5h-5zM866 405h5v15h-5zM881 415h10v5h-10zM926 415h5v5h-5zM970 415h5v5h-5zM736 420h10v5h-10zM761 420h15v5h-15zM801 420h5v5h-5zM811 420h5v5h-5zM846 420h10v5h-10zM861 420h10v5h-10zM881 420h15v5h-15zM906 420h5v5h-5zM950 415h5v10h-5zM960 420h10v5h-10zM696 425h5v5h-5zM716 425h5v5h-5zM741 425h5v5h-5zM771 425h15v5h-15zM796 425h5v5h-5zM816 425h5v5h-5zM851 425h5v5h-5zM876 425h5v5h-5zM896 425h5v5h-5zM980 425h10v5h-10zM995 425h5v5h-5zM682 430h5v5h-5zM706 425h5v10h-5zM731 430h5v5h-5zM741 430h10v5h-10zM766 430h15v5h-15zM791 430h10v5h-10zM811 430h5v5h-5zM846 430h5v5h-5zM856 430h5v5h-5zM871 430h15v5h-15zM901 430h5v5h-5zM931 430h5v5h-5zM940 430h5v5h-5zM965 430h5v5h-5zM711 435h5v5h-5zM721 430h5v10h-5zM751 435h5v5h-5zM771 435h10v5h-10zM801 435h5v5h-5zM816 435h5v5h-5zM851 435h5v5h-5zM866 435h10v5h-10zM911 435h5v5h-5zM955 430h5v10h-5zM995 435h5v5h-5zM701 440h5v5h-5zM716 440h10v5h-10zM746 440h5v5h-5zM796 440h5v5h-5zM866 440h5v5h-5zM916 440h5v5h-5zM926 440h5v5h-5zM940 440h5v5h-5zM950 440h15v5h-15zM970 440h5v5h-5zM716 445h15v5h-15zM756 445h5v5h-5zM801 445h5v5h-5zM841 440h5v10h-5zM856 445h5v5h-5zM876 445h5v5h-5zM901 445h5v5h-5zM931 445h5v5h-5zM955 445h5v5h-5zM975 445h5v5h-5zM985 445h5v5h-5zM691 450h5v5h-5zM706 450h10v5h-10zM741 450h5v5h-5zM766 450h5v5h-5zM806 450h10v5h-10zM901 450h10v5h-10zM916 450h5v5h-5zM960 450h10v5h-10zM990 450h5v5h-5zM687 455h24v5h-24zM751 455h5v5h-5zM771 455h5v5h-5zM786 450h5v10h-5zM811 455h5v5h-5zM891 445h5v15h-5zM911 455h5v5h-5zM940 455h5v5h-5zM960 455h5v5h-5zM975 455h5v5h-5zM985 455h5v5h-5zM691 460h15v5h-15zM726 460h15v5h-15zM776 460h5v5h-5zM846 460h10v5h-10zM906 460h5v5h-5zM950 460h10v5h-10zM970 460h5v5h-5zM682 465h5v5h-5zM706 465h10v5h-10zM741 465h10v5h-10zM766 465h10v5h-10zM846 465h5v5h-5zM861 465h5v5h-5zM876 465h10v5h-10zM896 465h5v5h-5zM926 460h5v10h-5zM945 465h5v5h-5zM955 465h10v5h-10zM975 465h5v5h-5zM985 465h15v5h-15zM701 470h5v5h-5zM726 470h10v5h-10zM746 470h5v5h-5zM766 470h5v5h-5zM806 470h5v5h-5zM816 470h5v5h-5zM881 470h5v5h-5zM891 470h10v5h-10zM911 470h5v5h-5zM955 470h15v5h-15zM682 475h5v5h-5zM691 475h5v5h-5zM711 475h5v5h-5zM721 475h5v5h-5zM851 470h5v10h-5zM876 475h5v5h-5zM886 475h10v5h-10zM921 475h15v5h-15zM965 475h10v5h-10zM691 480h15v5h-15zM736 475h5v10h-5zM781 475h10v10h-10zM796 480h5v5h-5zM811 475h5v10h-5zM871 480h5v5h-5zM896 480h10v5h-10zM916 480h10v5h-10zM970 480h5v5h-5zM721 485h5v4h-5zM746 485h5v4h-5zM786 485h10v4h-10zM841 485h10v4h-10zM861 485h10v4h-10zM901 485h5v4h-5zM940 485h5v4h-5zM950 480h5v9h-5zM975 485h5v4h-5zM687 489h4v5h-4zM736 489h5v5h-5zM776 489h5v5h-5zM801 485h10v9h-10zM871 489h5v5h-5zM891 489h5v5h-5zM960 489h5v5h-5zM985 489h5v5h-5zM691 494h15v5h-15zM716 494h10v5h-10zM741 494h10v5h-10zM756 494h5v5h-5zM766 485h5v14h-5zM796 494h5v5h-5zM806 494h5v5h-5zM876 494h5v5h-5zM886 494h5v5h-5zM896 494h5v5h-5zM906 489h5v10h-5zM940 494h5v5h-5zM970 489h5v10h-5zM990 494h10v5h-10zM682 499h5v5h-5zM721 499h10v5h-10zM786 499h25v5h-25zM841 499h5v5h-5zM851 499h5v5h-5zM871 499h10v5h-10zM901 499h5v5h-5zM990 499h5v5h-5zM701 504h5v5h-5zM736 499h5v10h-5zM746 504h10v5h-10zM766 499h10v10h-10zM896 504h5v5h-5zM911 504h5v5h-5zM926 504h5v5h-5zM980 504h5v5h-5zM995 504h5v5h-5zM801 504h10v10h-10zM891 509h10v5h-10zM936 509h4v5h-4zM955 504h10v10h-10zM985 509h10v5h-10zM682 514h5v5h-5zM691 514h5v5h-5zM711 514h5v5h-5zM726 514h5v5h-5zM751 514h5v5h-5zM781 514h10v5h-10zM811 514h5v5h-5zM841 514h5v5h-5zM891 514h5v5h-5zM940 514h5v5h-5zM990 514h5v5h-5zM687 519h9v5h-9zM711 519h10v5h-10zM731 519h5v5h-5zM741 509h5v15h-5zM766 519h5v5h-5zM781 519h5v5h-5zM856 519h10v5h-10zM896 519h5v5h-5zM906 519h5v5h-5zM916 519h5v5h-5zM931 519h5v5h-5zM945 519h5v5h-5zM965 519h5v5h-5zM980 519h15v5h-15zM682 524h5v5h-5zM696 524h15v5h-15zM716 524h5v5h-5zM851 524h5v5h-5zM861 524h5v5h-5zM896 524h10v5h-10zM911 524h10v5h-10zM985 524h10v5h-10zM701 529h10v5h-10zM726 529h5v5h-5zM776 524h5v10h-5zM811 529h10v5h-10zM871 524h10v10h-10zM901 529h10v5h-10zM916 529h15v5h-15zM945 529h5v5h-5zM960 529h5v5h-5zM970 529h5v5h-5zM985 529h5v5h-5zM995 529h5v5h-5zM696 534h5v5h-5zM771 534h5v5h-5zM786 534h5v5h-5zM866 534h5v5h-5zM896 534h10v5h-10zM926 534h5v5h-5zM701 539h5v5h-5zM741 539h15v5h-15zM781 539h5v5h-5zM796 539h5v5h-5zM806 539h5v5h-5zM886 539h10v5h-10zM906 539h15v5h-15zM940 539h5v5h-5zM955 539h5v5h-5zM965 539h5v5h-5zM980 539h10v5h-10zM701 544h15v5h-15zM721 539h5v10h-5zM746 544h5v5h-5zM771 544h10v5h-10zM801 544h5v5h-5zM851 544h5v5h-5zM876 544h5v5h-5zM975 544h10v5h-10zM716 549h15v5h-15zM766 549h25v5h-25zM841 549h10v5h-10zM856 549h5v5h-5zM871 549h5v5h-5zM886 549h10v5h-10zM901 549h5v5h-5zM945 549h10v5h-10zM691 554h10v5h-10zM736 549h5v10h-5zM781 554h5v5h-5zM796 549h10v10h-10zM856 554h15v5h-15zM876 554h5v5h-5zM891 554h5v5h-5zM906 554h5v5h-5zM936 554h4v5h-4zM950 554h10v5h-10zM975 554h5v5h-5zM985 554h5v5h-5zM687 559h9v5h-9zM701 559h5v5h-5zM711 559h5v5h-5zM721 554h5v10h-5zM751 559h5v5h-5zM761 559h10v5h-10zM786 559h5v5h-5zM796 559h5v5h-5zM806 559h5v5h-5zM846 559h5v5h-5zM856 559h10v5h-10zM940 559h10v5h-10zM955 559h5v5h-5zM701 564h15v5h-15zM746 564h10v5h-10zM801 564h10v5h-10zM816 559h5v10h-5zM841 564h5v5h-5zM851 564h5v5h-5zM886 564h5v5h-5zM896 564h5v5h-5zM911 564h5v5h-5zM945 564h15v5h-15zM965 564h5v5h-5zM990 559h5v10h-5z"/><path fill="#b6a76c" d="M916 91h5v5h-5zM916 106h5v5h-5zM916 111h10v5h-10zM916 116h5v10h-5zM921 126h5v10h-5zM916 136h10v20h-10zM916 156h5v5h-5zM916 161h10v5h-10zM916 166h5v10h-5zM916 176h10v5h-10zM921 181h5v5h-5zM916 191h10v10h-10zM916 201h5v5h-5zM916 206h10v5h-10zM916 211h5v25h-5zM921 236h5v9h-5zM916 250h10v160h-10zM916 425h10v10h-10zM916 465h10v10h-10zM916 504h10v10h-10zM916 544h10v10h-10z"/><path fill="#8b8b8b" d="M44 91h488v10h-488zM44 101h10v139h-10zM193 101h20v139h-20zM353 101h20v139h-20zM512 101h20v139h-20zM44 240h488v10h-488zM512 250h10v5h-10zM527 250h5v5h-5zM627 91h10v164h-10zM263 250h10v10h-10zM323 250h10v15h-10zM338 250h10v15h-10zM597 91h10v174h-10zM59 250h10v20h-10zM74 250h10v20h-10zM89 250h10v20h-10zM149 250h10v20h-10zM164 250h10v20h-10zM179 250h10v20h-10zM218 250h10v20h-10zM233 250h10v20h-10zM248 250h10v20h-10zM268 260h5v10h-5zM308 250h10v20h-10zM323 265h5v5h-5zM343 265h5v5h-5zM378 250h10v20h-10zM393 250h10v20h-10zM408 250h10v20h-10zM467 250h10v20h-10zM482 250h10v20h-10zM497 250h10v20h-10zM512 255h15v15h-15zM632 255h5v15h-5zM602 265h5v10h-5zM218 270h5v10h-5zM537 91h10v189h-10zM612 91h10v189h-10zM642 91h10v189h-10zM672 91h10v189h-10zM263 270h5v15h-5zM542 280h5v5h-5zM612 280h5v5h-5zM278 250h10v40h-10zM512 270h20v20h-20zM537 285h5v5h-5zM552 91h10v199h-10zM642 280h5v10h-5zM672 280h5v10h-5zM253 270h5v25h-5zM263 285h10v10h-10zM557 290h5v5h-5zM597 275h5v20h-5zM617 285h5v10h-5zM218 285h5v15h-5zM263 295h5v5h-5zM283 290h5v10h-5zM293 250h10v50h-10zM512 290h10v10h-10zM527 290h5v10h-5zM552 295h5v5h-5zM268 300h5v5h-5zM278 300h5v5h-5zM308 270h5v35h-5zM657 91h10v214h-10zM59 270h5v40h-5zM94 270h5v40h-5zM149 270h5v40h-5zM184 270h5v40h-5zM253 300h5v10h-5zM293 305h10v5h-10zM343 285h5v25h-5zM378 270h5v40h-5zM413 270h5v40h-5zM467 270h5v40h-5zM502 270h5v40h-5zM512 300h15v10h-15zM567 91h10v219h-10zM677 290h5v20h-5zM218 310h5v5h-5zM233 310h10v5h-10zM293 310h5v5h-5zM537 290h10v25h-10zM597 295h10v20h-10zM238 315h5v5h-5zM248 310h10v10h-10zM278 305h10v15h-10zM298 315h5v5h-5zM313 310h5v10h-5zM338 310h10v10h-10zM552 300h10v20h-10zM233 320h5v5h-5zM253 320h5v5h-5zM263 305h10v20h-10zM343 320h5v5h-5zM557 320h5v5h-5zM572 310h5v15h-5zM597 315h5v10h-5zM662 305h5v20h-5zM248 325h5v5h-5zM293 320h10v10h-10zM552 325h5v5h-5zM567 325h5v5h-5zM582 91h10v239h-10zM233 325h10v10h-10zM253 330h5v5h-5zM537 320h10v15h-10zM557 330h5v5h-5zM587 330h5v5h-5zM657 325h5v10h-5zM233 335h5v5h-5zM293 330h5v10h-5zM537 335h5v5h-5zM582 335h5v5h-5zM602 325h5v15h-5zM662 335h5v5h-5zM238 340h5v5h-5zM278 325h10v20h-10zM298 340h5v5h-5zM338 325h5v20h-5zM542 340h5v5h-5zM587 340h5v5h-5zM597 340h5v5h-5zM612 295h10v50h-10zM627 270h10v75h-10zM642 290h10v55h-10zM263 330h10v20h-10zM278 345h5v5h-5zM378 310h10v40h-10zM393 310h10v40h-10zM408 310h10v40h-10zM467 310h10v40h-10zM482 310h10v40h-10zM497 310h10v40h-10zM537 345h10v5h-10zM567 330h10v20h-10zM632 345h5v5h-5zM248 335h10v20h-10zM263 350h5v5h-5zM283 350h5v5h-5zM293 345h10v10h-10zM308 320h10v35h-10zM512 310h20v45h-20zM627 350h5v5h-5zM89 310h10v50h-10zM104 250h10v110h-10zM119 250h10v110h-10zM134 250h10v110h-10zM149 310h10v50h-10zM248 355h5v5h-5zM268 355h5v5h-5zM278 355h10v5h-10zM293 355h5v5h-5zM313 355h5v5h-5zM323 310h10v50h-10zM537 350h5v10h-5zM567 350h5v10h-5zM632 355h5v5h-5zM642 350h5v10h-5zM218 315h10v50h-10zM233 345h10v20h-10zM323 360h5v5h-5zM512 355h15v10h-15zM223 365h5v5h-5zM328 365h5v5h-5zM343 345h5v25h-5zM552 335h10v35h-10zM647 360h5v10h-5zM218 370h5v5h-5zM512 365h10v10h-10zM527 370h5v5h-5zM627 360h10v15h-10zM233 370h10v10h-10zM323 370h10v10h-10zM552 370h5v10h-5zM572 360h5v20h-5zM657 340h10v40h-10zM323 380h5v5h-5zM557 380h5v5h-5zM218 375h10v15h-10zM313 365h5v25h-5zM328 385h5v5h-5zM378 350h5v40h-5zM413 350h5v40h-5zM467 350h5v40h-5zM502 350h5v40h-5zM567 380h5v10h-5zM627 375h5v15h-5zM662 380h5v10h-5zM218 390h5v5h-5zM632 390h5v5h-5zM657 390h5v10h-5zM89 360h5v50h-5zM154 360h5v50h-5zM248 375h5v35h-5zM313 395h5v15h-5zM627 395h10v15h-10zM74 310h10v105h-10zM233 385h10v30h-10zM627 410h5v5h-5zM59 310h10v110h-10zM79 415h5v5h-5zM218 395h10v25h-10zM238 415h5v5h-5zM44 250h10v175h-10zM74 420h10v5h-10zM89 410h10v15h-10zM119 410h10v15h-10zM149 410h10v15h-10zM164 310h10v115h-10zM179 310h10v115h-10zM193 250h20v175h-20zM233 420h10v5h-10zM248 410h10v15h-10zM308 410h10v15h-10zM323 390h10v35h-10zM338 370h10v55h-10zM612 350h10v75h-10zM44 425h5v5h-5zM59 425h10v5h-10zM119 425h5v5h-5zM134 410h10v20h-10zM149 425h5v5h-5zM193 425h15v5h-15zM218 425h10v5h-10zM308 425h5v5h-5zM378 390h10v40h-10zM393 390h10v40h-10zM408 390h10v40h-10zM467 390h10v40h-10zM482 390h10v40h-10zM497 390h10v40h-10zM612 425h5v5h-5zM632 425h5v5h-5zM104 410h10v25h-10zM139 430h5v5h-5zM193 430h10v5h-10zM263 410h10v25h-10zM353 250h20v185h-20zM597 345h10v90h-10zM617 430h5v5h-5zM49 430h5v10h-5zM134 435h5v5h-5zM198 435h5v5h-5zM208 430h5v10h-5zM268 435h5v5h-5zM358 435h15v5h-15zM512 375h20v65h-20zM597 435h5v5h-5zM612 435h5v5h-5zM642 370h10v70h-10zM672 310h10v130h-10zM139 440h5v5h-5zM293 410h10v35h-10zM512 440h10v5h-10zM527 440h5v5h-5zM582 345h10v100h-10zM602 440h5v5h-5zM278 410h10v40h-10zM293 445h5v5h-5zM512 445h15v5h-15zM537 360h10v90h-10zM567 390h10v60h-10zM597 445h10v5h-10zM642 440h5v10h-5zM672 440h5v10h-5zM109 435h5v20h-5zM193 440h5v15h-5zM203 440h10v15h-10zM268 445h5v10h-5zM353 440h5v15h-5zM363 440h10v15h-10zM542 450h5v5h-5zM552 385h10v70h-10zM612 445h5v10h-5zM149 435h5v25h-5zM293 450h10v10h-10zM537 455h5v5h-5zM582 450h10v10h-10zM104 455h5v10h-5zM263 455h5v10h-5zM298 460h5v5h-5zM582 460h5v5h-5zM617 455h5v10h-5zM657 400h10v65h-10zM59 430h5v40h-5zM94 430h5v40h-5zM104 465h10v5h-10zM119 430h10v40h-10zM218 430h5v40h-5zM253 430h5v40h-5zM308 440h5v30h-5zM343 430h5v40h-5zM378 430h5v40h-5zM413 430h5v40h-5zM467 430h5v40h-5zM502 430h5v40h-5zM567 455h10v15h-10zM597 455h10v15h-10zM612 465h10v5h-10zM677 450h5v20h-5zM104 470h5v5h-5zM149 470h5v5h-5zM164 470h5v5h-5zM184 430h5v45h-5zM198 455h15v20h-15zM358 455h15v20h-15zM567 470h5v5h-5zM587 470h5v5h-5zM597 470h5v5h-5zM124 470h5v10h-5zM149 475h10v5h-10zM169 475h5v5h-5zM179 475h10v5h-10zM263 465h10v15h-10zM278 455h10v25h-10zM308 470h10v10h-10zM338 470h10v10h-10zM552 460h10v20h-10zM617 470h5v10h-5zM119 480h5v5h-5zM149 480h5v5h-5zM263 480h5v5h-5zM308 480h5v5h-5zM537 460h10v25h-10zM552 480h5v5h-5zM602 475h5v10h-5zM662 465h5v20h-5zM537 485h5v4h-5zM557 485h5v4h-5zM582 475h10v14h-10zM597 485h10v4h-10zM134 445h10v49h-10zM154 485h5v9h-5zM179 480h5v14h-5zM248 470h10v24h-10zM293 465h10v29h-10zM313 485h5v9h-5zM338 480h5v14h-5zM512 450h20v44h-20zM542 489h5v5h-5zM582 489h5v5h-5zM657 485h5v9h-5zM218 470h10v29h-10zM233 470h10v29h-10zM283 480h5v19h-5zM512 494h15v5h-15zM567 480h10v19h-10zM597 489h5v10h-5zM662 494h5v5h-5zM149 494h10v10h-10zM164 480h10v24h-10zM184 499h5v5h-5zM223 499h5v5h-5zM233 499h5v5h-5zM253 499h5v5h-5zM278 499h5v5h-5zM308 494h10v10h-10zM323 470h10v34h-10zM343 499h5v5h-5zM537 494h10v10h-10zM552 489h10v15h-10zM587 494h5v10h-5zM612 480h10v24h-10zM627 430h10v74h-10zM642 450h10v54h-10zM59 470h10v39h-10zM74 470h10v39h-10zM89 470h10v39h-10zM218 504h5v5h-5zM238 504h5v5h-5zM248 504h10v5h-10zM268 489h5v20h-5zM378 470h10v39h-10zM393 470h10v39h-10zM408 470h10v39h-10zM467 470h10v39h-10zM482 470h10v39h-10zM497 470h10v39h-10zM567 504h10v5h-10zM597 499h10v10h-10zM632 504h5v5h-5zM134 499h10v15h-10zM293 499h10v15h-10zM552 509h10v5h-10zM567 509h5v5h-5zM582 504h10v10h-10zM627 509h5v5h-5zM278 504h10v15h-10zM552 514h5v5h-5zM572 514h5v5h-5zM582 514h5v5h-5zM632 514h5v5h-5zM642 509h5v10h-5zM253 509h5v15h-5zM263 509h10v15h-10zM278 519h5v5h-5zM557 519h5v5h-5zM567 519h5v5h-5zM587 519h5v5h-5zM134 519h5v10h-5zM283 524h5v5h-5zM293 519h5v10h-5zM552 524h10v5h-10zM572 524h5v5h-5zM647 519h5v10h-5zM353 475h20v59h-20zM512 499h20v35h-20zM552 529h5v5h-5zM627 519h10v15h-10zM193 475h20v64h-20zM268 524h5v15h-5zM353 534h5v5h-5zM363 534h10v5h-10zM512 534h10v5h-10zM537 509h10v30h-10zM657 499h10v40h-10zM139 529h5v15h-5zM278 529h10v15h-10zM59 509h5v40h-5zM94 509h5v40h-5zM149 509h5v40h-5zM184 519h5v30h-5zM198 539h15v10h-15zM218 519h5v30h-5zM263 539h5v10h-5zM308 509h5v40h-5zM343 519h5v30h-5zM358 539h15v10h-15zM378 509h5v40h-5zM413 509h5v40h-5zM467 509h5v40h-5zM502 509h5v40h-5zM627 534h5v15h-5zM662 539h5v10h-5zM233 549h10v5h-10zM253 549h5v5h-5zM268 549h5v5h-5zM283 544h5v10h-5zM632 549h5v5h-5zM179 549h10v10h-10zM233 554h5v5h-5zM278 554h5v5h-5zM338 549h10v10h-10zM657 549h5v10h-5zM134 544h5v20h-5zM179 559h5v5h-5zM238 559h5v5h-5zM338 559h5v5h-5zM672 470h10v94h-10zM44 440h10v129h-10zM59 549h10v20h-10zM74 549h10v20h-10zM89 549h10v20h-10zM104 475h10v94h-10zM119 485h10v84h-10zM134 564h10v5h-10zM149 549h10v20h-10zM164 549h10v20h-10zM179 564h10v5h-10zM193 549h20v20h-20zM218 549h10v20h-10zM233 564h10v5h-10zM248 554h10v15h-10zM263 554h10v15h-10zM278 559h10v10h-10zM293 529h10v40h-10zM308 549h10v20h-10zM323 549h10v20h-10zM338 564h10v5h-10zM353 549h20v20h-20zM378 549h10v20h-10zM393 549h10v20h-10zM408 549h10v20h-10zM423 250h10v319h-10zM438 250h9v319h-9zM452 250h10v319h-10zM467 549h10v20h-10zM482 549h10v20h-10zM497 549h10v20h-10zM512 539h20v30h-20zM537 544h10v25h-10zM552 539h10v30h-10zM567 529h10v40h-10zM582 524h10v45h-10zM597 514h10v55h-10zM612 509h10v60h-10zM627 554h10v15h-10zM642 529h10v40h-10zM657 559h10v10h-10z"/><path fill="#717171" d="M373 101h25v5h-25zM457 101h55v5h-55zM373 106h30v5h-30zM452 106h60v5h-60zM54 101h139v15h-139zM213 101h140v15h-140zM373 111h35v5h-35zM442 111h70v5h-70zM373 116h15v30h-15zM373 146h5v5h-5zM373 156h5v5h-5zM54 116h15v124h-15zM213 116h15v124h-15zM373 161h15v79h-15z"/><path fill="#5b5b5b" d="M398 101h59v5h-59zM442 116h20v5h-20zM403 121h10v5h-10zM492 131h15v5h-15zM487 136h5v5h-5zM507 136h5v5h-5zM378 146h15v5h-15zM373 151h5v5h-5zM442 156h15v5h-15zM438 161h4v5h-4zM457 161h5v5h-5zM433 166h5v5h-5zM457 171h5v5h-5zM398 191h20v5h-20zM418 196h20v5h-20zM393 201h5v5h-5zM482 201h10v5h-10zM388 206h5v5h-5zM472 206h10v5h-10zM492 206h5v5h-5zM497 211h10v5h-10zM507 216h5v5h-5zM477 221h5v5h-5zM467 226h10v5h-10z"/><path fill="#3e3e3e" d="M403 106h49v5h-49zM408 111h34v5h-34zM413 116h29v5h-29zM413 121h54v5h-54zM408 126h49v5h-49zM492 136h15v5h-15zM487 141h20v5h-20zM378 151h15v5h-15zM378 156h20v5h-20zM442 161h15v5h-15zM438 166h19v10h-19zM447 176h10v5h-10zM398 196h20v5h-20zM398 201h40v5h-40zM393 206h35v5h-35zM482 206h10v5h-10zM393 211h25v5h-25zM472 211h25v5h-25zM482 216h25v5h-25zM482 221h30v5h-30zM477 226h35v5h-35zM477 231h30v5h-30zM482 236h20v4h-20zM318 290h20v10h-20zM328 300h10v5h-10zM492 440h5v5h-5zM398 445h10v5h-10zM487 445h10v5h-10zM388 450h20v5h-20zM393 455h10v5h-10zM482 455h5v5h-5zM398 460h5v5h-5zM477 460h15v5h-15zM388 514h20v5h-20zM393 519h15v5h-15zM398 524h10v5h-10zM487 524h5v5h-5zM398 529h5v5h-5zM482 529h10v5h-10zM393 534h5v5h-5zM477 534h20v5h-20zM482 539h15v5h-15z"/><path fill="#808080" d="M682 96h19v15h-19zM821 96h20v15h-20zM682 116h19v15h-19zM821 116h20v15h-20zM682 136h19v15h-19zM821 136h20v15h-20zM682 156h19v15h-19zM821 156h20v15h-20zM682 176h19v15h-19zM821 176h20v15h-20zM682 196h19v15h-19zM821 196h20v15h-20zM682 216h19v15h-19zM821 216h20v15h-20zM682 236h19v14h-19zM821 236h20v14h-20zM682 255h19v15h-19zM682 275h19v15h-19zM682 295h19v15h-19zM682 315h19v15h-19zM682 335h19v15h-19zM682 355h19v15h-19zM682 375h19v15h-19zM682 395h19v15h-19zM821 415h20v15h-20zM821 435h20v15h-20zM821 455h20v15h-20zM821 475h20v14h-20zM821 494h20v15h-20zM821 514h20v15h-20zM821 534h20v15h-20zM821 554h20v15h-20z"/><path fill="#7e7e7e" d="M69 116h124v5h-124zM388 116h25v5h-25zM462 116h50v5h-50zM69 121h10v5h-10zM84 121h109v5h-109zM228 116h125v10h-125zM388 121h10v5h-10zM467 121h45v5h-45zM69 126h124v5h-124zM228 126h20v5h-20zM253 126h75v5h-75zM333 126h20v5h-20zM388 126h20v5h-20zM457 126h55v5h-55zM69 131h45v5h-45zM119 131h74v5h-74zM228 131h125v5h-125zM388 131h45v5h-45zM438 131h54v5h-54zM507 131h5v5h-5zM69 136h110v5h-110zM184 136h9v5h-9zM228 136h45v5h-45zM278 136h75v5h-75zM69 141h124v5h-124zM228 141h35v5h-35zM268 141h5v5h-5zM293 141h60v5h-60zM388 136h99v10h-99zM507 141h5v5h-5zM69 146h20v5h-20zM94 146h99v5h-99zM228 146h15v5h-15zM248 146h30v5h-30zM303 146h50v5h-50zM393 146h15v5h-15zM413 146h99v5h-99zM69 151h70v5h-70zM144 151h49v5h-49zM228 151h30v5h-30zM268 151h5v5h-5zM298 151h10v5h-10zM313 151h40v5h-40zM393 151h64v5h-64zM462 151h50v5h-50zM69 156h85v5h-85zM159 156h34v5h-34zM228 156h40v5h-40zM298 156h55v5h-55zM398 156h44v5h-44zM457 156h15v5h-15zM477 156h35v5h-35zM69 161h124v5h-124zM268 161h5v5h-5zM278 161h10v5h-10zM293 161h5v5h-5zM308 161h45v5h-45zM388 161h50v5h-50zM462 161h50v5h-50zM69 166h45v5h-45zM119 166h74v5h-74zM228 161h35v10h-35zM268 166h10v5h-10zM293 166h20v5h-20zM318 166h35v5h-35zM388 166h45v5h-45zM457 166h55v5h-55zM69 171h124v5h-124zM228 171h30v5h-30zM263 171h90v5h-90zM388 171h50v5h-50zM462 171h50v5h-50zM69 176h25v5h-25zM99 176h94v5h-94zM228 176h40v5h-40zM273 176h65v5h-65zM388 176h25v5h-25zM418 176h29v5h-29zM457 176h55v5h-55zM69 181h15v5h-15zM89 181h104v5h-104zM228 181h110v5h-110zM348 176h5v10h-5zM388 181h15v5h-15zM408 181h104v5h-104zM228 186h5v5h-5zM238 186h70v5h-70zM313 186h25v5h-25zM388 186h124v5h-124zM69 186h124v10h-124zM228 191h70v5h-70zM303 191h10v5h-10zM418 191h94v5h-94zM69 196h20v5h-20zM94 196h35v5h-35zM134 196h59v5h-59zM228 196h90v5h-90zM323 191h10v10h-10zM388 191h10v10h-10zM438 196h9v5h-9zM452 196h60v5h-60zM69 201h95v5h-95zM169 201h24v5h-24zM228 201h95v5h-95zM333 201h5v5h-5zM388 201h5v5h-5zM438 201h44v5h-44zM492 201h20v5h-20zM228 206h30v5h-30zM263 206h70v5h-70zM428 206h44v5h-44zM497 206h15v5h-15zM69 206h124v10h-124zM258 211h30v5h-30zM293 211h30v5h-30zM333 211h10v5h-10zM388 211h5v5h-5zM418 211h54v5h-54zM507 211h5v5h-5zM69 216h110v5h-110zM184 216h9v5h-9zM228 211h25v10h-25zM263 216h5v5h-5zM273 216h5v5h-5zM283 216h35v5h-35zM328 216h20v5h-20zM388 216h94v5h-94zM69 221h90v5h-90zM164 221h29v5h-29zM243 221h5v5h-5zM278 221h5v5h-5zM288 221h65v5h-65zM388 221h89v5h-89zM69 226h15v5h-15zM89 226h104v5h-104zM228 221h10v10h-10zM248 226h5v5h-5zM258 226h10v5h-10zM283 226h60v5h-60zM348 226h5v5h-5zM388 226h15v5h-15zM408 226h59v5h-59zM69 231h50v5h-50zM124 231h69v5h-69zM228 231h5v5h-5zM238 231h20v5h-20zM288 231h65v5h-65zM388 231h50v5h-50zM442 231h35v5h-35zM507 231h5v5h-5zM69 236h124v4h-124zM228 236h20v4h-20zM283 236h70v4h-70zM388 236h94v4h-94zM502 236h10v4h-10zM99 365h50v5h-50zM258 365h25v5h-25zM288 365h20v5h-20zM99 370h5v40h-5zM144 370h5v40h-5zM258 370h5v40h-5zM303 370h5v40h-5z"/><path fill="#737373" d="M79 121h5v5h-5zM248 126h5v5h-5zM328 126h5v5h-5zM114 131h5v5h-5zM179 136h5v5h-5zM263 141h5v5h-5zM89 146h5v5h-5zM243 146h5v5h-5zM139 151h5v5h-5zM308 151h5v5h-5zM154 156h5v5h-5zM114 166h5v5h-5zM313 166h5v5h-5zM94 176h5v5h-5zM268 176h5v5h-5zM84 181h5v5h-5zM233 186h5v5h-5zM298 191h5v5h-5zM89 196h5v5h-5zM129 196h5v5h-5zM164 201h5v5h-5zM288 211h5v5h-5zM179 216h5v5h-5zM268 216h5v5h-5zM318 216h5v5h-5zM159 221h5v5h-5zM238 221h5v5h-5zM283 221h5v5h-5zM84 226h5v5h-5zM343 226h5v5h-5zM119 231h5v5h-5z"/><path fill="#878787" d="M398 121h5v5h-5zM433 131h5v5h-5zM408 146h5v5h-5zM457 151h5v5h-5zM472 156h5v5h-5zM413 176h5v5h-5zM403 181h5v5h-5zM447 196h5v5h-5zM403 226h5v5h-5zM438 231h4v5h-4z"/><path fill="#6f9579" d="M273 136h5v5h-5zM273 141h20v5h-20zM293 146h10v5h-10zM258 151h10v5h-10zM283 146h5v10h-5zM273 156h10v5h-10zM288 156h10v5h-10zM273 161h5v5h-5zM298 161h10v5h-10zM263 166h5v5h-5zM278 166h5v5h-5zM288 166h5v5h-5zM258 171h5v5h-5zM338 176h5v5h-5zM343 181h5v5h-5zM308 186h5v5h-5zM338 186h5v5h-5zM318 191h5v5h-5zM348 191h5v5h-5zM333 191h5v10h-5zM343 196h10v5h-10zM338 201h5v5h-5zM348 201h5v5h-5zM258 206h5v5h-5zM333 206h5v5h-5zM253 211h5v5h-5zM323 211h10v5h-10zM343 206h5v10h-5zM278 216h5v5h-5zM323 216h5v5h-5zM348 216h5v5h-5zM248 221h5v5h-5zM258 221h15v5h-15zM238 226h5v5h-5zM273 226h10v5h-10zM233 231h5v5h-5zM258 231h15v5h-15zM283 231h5v5h-5zM248 236h5v4h-5zM258 236h5v4h-5zM273 236h5v4h-5z"/><path fill="#567a60" d="M278 146h5v5h-5zM288 146h5v5h-5zM273 151h10v5h-10zM288 151h10v5h-10zM268 156h5v5h-5zM283 156h5v5h-5zM263 161h5v5h-5zM288 161h5v5h-5zM283 166h5v5h-5zM343 176h5v5h-5zM338 181h5v5h-5zM343 186h10v5h-10zM313 191h5v5h-5zM338 191h10v5h-10zM318 196h5v5h-5zM338 196h5v5h-5zM323 201h10v5h-10zM343 201h5v5h-5zM338 206h5v5h-5zM348 206h5v10h-5zM253 216h10v5h-10zM273 221h5v5h-5zM243 226h5v5h-5zM253 221h5v10h-5zM268 226h5v5h-5zM273 231h10v5h-10zM253 236h5v4h-5zM263 236h10v4h-10zM278 236h5v4h-5z"/><path fill="#7c7c7c" d="M622 91h5v159h-5zM592 91h5v169h-5zM273 250h5v15h-5zM333 250h5v15h-5zM69 250h5v20h-5zM84 250h5v20h-5zM159 250h5v20h-5zM174 250h5v20h-5zM228 250h5v20h-5zM243 250h5v20h-5zM318 250h5v20h-5zM388 250h5v20h-5zM403 250h5v20h-5zM477 250h5v20h-5zM492 250h5v20h-5zM532 91h5v179h-5zM622 255h5v15h-5zM273 270h5v15h-5zM348 250h5v35h-5zM547 91h5v199h-5zM652 91h5v199h-5zM273 290h5v5h-5zM607 91h5v204h-5zM258 250h5v50h-5zM288 250h5v50h-5zM562 91h5v209h-5zM303 250h5v55h-5zM532 280h5v30h-5zM667 91h5v219h-5zM228 310h5v5h-5zM288 305h5v10h-5zM243 310h5v10h-5zM273 300h5v20h-5zM303 310h5v10h-5zM547 295h5v25h-5zM258 305h5v20h-5zM562 310h5v15h-5zM577 91h5v239h-5zM243 325h5v10h-5zM547 325h5v10h-5zM592 265h5v70h-5zM607 315h5v25h-5zM652 305h5v35h-5zM288 320h5v25h-5zM532 315h5v30h-5zM577 335h5v10h-5zM622 280h5v65h-5zM273 325h5v25h-5zM388 310h5v40h-5zM403 310h5v40h-5zM477 310h5v40h-5zM492 310h5v40h-5zM637 91h5v259h-5zM258 330h5v25h-5zM303 330h5v25h-5zM333 320h5v35h-5zM99 250h5v110h-5zM114 250h5v110h-5zM129 250h5v110h-5zM144 250h5v110h-5zM243 340h5v20h-5zM273 355h5v5h-5zM288 350h5v10h-5zM652 345h5v15h-5zM318 310h5v55h-5zM562 330h5v35h-5zM228 320h5v50h-5zM333 360h5v10h-5zM637 355h5v15h-5zM243 365h5v10h-5zM228 375h5v10h-5zM318 370h5v20h-5zM577 350h5v40h-5zM54 250h5v170h-5zM69 310h5v110h-5zM213 250h5v170h-5zM228 390h5v30h-5zM622 350h5v70h-5zM84 310h5v115h-5zM159 310h5v115h-5zM174 310h5v115h-5zM243 380h5v45h-5zM318 395h5v30h-5zM333 380h5v45h-5zM69 425h5v5h-5zM99 410h5v20h-5zM129 410h5v20h-5zM189 250h4v180h-4zM228 425h5v5h-5zM258 410h5v20h-5zM348 325h5v105h-5zM388 390h5v40h-5zM403 390h5v40h-5zM477 390h5v40h-5zM492 390h5v40h-5zM607 345h5v85h-5zM144 410h5v25h-5zM303 410h5v30h-5zM592 340h5v100h-5zM273 410h5v35h-5zM577 395h5v50h-5zM607 435h5v10h-5zM532 355h5v95h-5zM652 380h5v70h-5zM144 440h5v15h-5zM288 410h5v45h-5zM547 350h5v105h-5zM562 370h5v85h-5zM592 445h5v10h-5zM607 450h5v10h-5zM114 410h5v55h-5zM273 450h5v15h-5zM189 435h4v35h-4zM348 435h5v35h-5zM577 455h5v15h-5zM667 325h5v145h-5zM159 470h5v5h-5zM562 460h5v20h-5zM607 470h5v10h-5zM258 435h5v50h-5zM547 460h5v25h-5zM592 460h5v25h-5zM532 455h5v34h-5zM144 460h5v34h-5zM303 445h5v49h-5zM577 475h5v19h-5zM243 470h5v29h-5zM288 460h5v39h-5zM562 485h5v14h-5zM652 465h5v34h-5zM159 480h5v24h-5zM174 475h5v29h-5zM228 470h5v34h-5zM318 470h5v34h-5zM333 470h5v34h-5zM547 489h5v15h-5zM577 499h5v5h-5zM622 440h5v64h-5zM69 470h5v39h-5zM84 470h5v39h-5zM144 504h5v5h-5zM243 504h5v5h-5zM258 494h5v15h-5zM303 504h5v5h-5zM388 470h5v39h-5zM403 470h5v39h-5zM477 470h5v39h-5zM492 470h5v39h-5zM607 489h5v20h-5zM637 375h5v134h-5zM562 504h5v10h-5zM592 489h5v25h-5zM189 485h4v34h-4zM213 425h5v94h-5zM288 504h5v15h-5zM348 485h5v34h-5zM547 509h5v10h-5zM577 509h5v10h-5zM652 504h5v15h-5zM562 519h5v10h-5zM637 514h5v15h-5zM532 494h5v40h-5zM273 480h5v59h-5zM547 524h5v15h-5zM189 539h4v10h-4zM348 539h5v10h-5zM667 485h5v74h-5zM144 519h5v45h-5zM54 425h5v144h-5zM69 549h5v20h-5zM84 549h5v20h-5zM99 435h5v134h-5zM114 470h5v99h-5zM129 435h5v134h-5zM159 549h5v20h-5zM174 549h5v20h-5zM189 559h4v10h-4zM213 534h5v35h-5zM228 549h5v20h-5zM243 554h5v15h-5zM258 524h5v45h-5zM273 544h5v25h-5zM288 524h5v45h-5zM303 519h5v50h-5zM318 549h5v20h-5zM333 549h5v20h-5zM348 559h5v10h-5zM373 250h5v319h-5zM388 549h5v20h-5zM403 549h5v20h-5zM418 250h5v319h-5zM433 250h5v319h-5zM447 250h5v319h-5zM462 250h5v319h-5zM477 549h5v20h-5zM492 549h5v20h-5zM507 250h5v319h-5zM532 539h5v30h-5zM547 544h5v25h-5zM562 534h5v35h-5zM577 524h5v45h-5zM592 519h5v50h-5zM607 514h5v55h-5zM622 509h5v60h-5zM637 534h5v35h-5zM652 539h5v30h-5zM667 564h5v5h-5z"/><path fill="#484848" d="M1160 91h25v159h-25zM1000 250h160v160h-160zM1160 410h25v159h-25zM44 569h159v160h-159zM363 569h159v160h-159zM682 569h159v160h-159zM1000 569h160v160h-160zM203 729h160v33h-160zM522 729h160v33h-160zM841 729h159v33h-159zM1160 729h25v33h-25z"/><path fill="#66896e" d="M522 250h5v5h-5zM622 250h5v5h-5zM592 260h5v5h-5zM263 260h5v10h-5zM273 265h5v5h-5zM328 265h15v5h-15zM527 255h5v15h-5zM627 255h5v15h-5zM597 265h5v10h-5zM532 270h5v10h-5zM622 270h5v10h-5zM218 280h5v5h-5zM268 270h5v15h-5zM343 270h5v15h-5zM537 280h5v5h-5zM617 280h5v5h-5zM273 285h5v5h-5zM542 285h5v5h-5zM647 280h5v10h-5zM677 280h5v10h-5zM278 290h5v5h-5zM547 290h10v5h-10zM602 275h5v20h-5zM612 285h5v10h-5zM223 285h5v15h-5zM248 295h10v5h-10zM268 295h15v5h-15zM522 290h5v10h-5zM557 295h5v5h-5zM258 300h10v5h-10zM283 300h20v5h-20zM313 300h15v5h-15zM652 290h5v15h-5zM218 300h5v10h-5zM303 305h10v5h-10zM323 305h10v5h-10zM527 300h5v10h-5zM562 300h5v10h-5zM672 290h5v20h-5zM223 310h5v5h-5zM298 310h5v5h-5zM532 310h5v5h-5zM607 295h5v20h-5zM228 315h10v5h-10zM288 315h10v5h-10zM308 310h5v10h-5zM333 310h5v10h-5zM537 315h10v5h-10zM238 320h15v5h-15zM273 320h15v5h-15zM338 320h5v5h-5zM348 285h5v40h-5zM547 320h10v5h-10zM567 310h5v15h-5zM602 315h5v10h-5zM657 305h5v20h-5zM667 310h5v15h-5zM253 325h20v5h-20zM303 320h5v10h-5zM557 325h10v5h-10zM572 325h5v5h-5zM248 330h5v5h-5zM552 330h5v5h-5zM577 330h10v5h-10zM597 325h5v10h-5zM662 325h5v10h-5zM238 335h10v5h-10zM298 330h5v10h-5zM542 335h10v5h-10zM587 335h15v5h-15zM657 335h5v5h-5zM233 340h5v5h-5zM293 340h5v5h-5zM343 325h5v20h-5zM537 340h5v5h-5zM582 340h5v5h-5zM602 340h10v5h-10zM652 340h5v5h-5zM283 345h10v5h-10zM547 340h5v10h-5zM577 345h5v5h-5zM612 345h20v5h-20zM642 345h10v5h-10zM268 350h15v5h-15zM338 345h5v10h-5zM532 345h5v10h-5zM632 350h10v5h-10zM253 355h15v5h-15zM298 355h15v5h-15zM333 355h10v5h-10zM542 350h5v10h-5zM572 350h5v10h-5zM627 355h5v5h-5zM647 350h5v10h-5zM243 360h15v5h-15zM288 360h10v5h-10zM313 360h5v5h-5zM328 360h5v5h-5zM527 355h5v10h-5zM567 360h5v5h-5zM218 365h5v5h-5zM233 365h10v5h-10zM283 365h5v5h-5zM318 365h10v5h-10zM338 360h5v10h-5zM522 365h10v5h-10zM562 365h10v5h-10zM642 360h5v10h-5zM223 370h10v5h-10zM248 365h5v10h-5zM522 370h5v5h-5zM637 370h5v5h-5zM243 375h5v5h-5zM278 370h5v10h-5zM333 370h5v10h-5zM557 370h5v10h-5zM567 370h5v10h-5zM652 360h5v20h-5zM233 380h10v5h-10zM328 380h5v5h-5zM552 380h5v5h-5zM228 385h5v5h-5zM273 380h5v10h-5zM323 385h5v5h-5zM572 380h5v10h-5zM632 375h5v15h-5zM657 380h5v10h-5zM223 390h5v5h-5zM268 390h5v5h-5zM313 390h10v5h-10zM577 390h5v5h-5zM627 390h5v5h-5zM662 390h5v10h-5zM632 410h5v5h-5zM74 415h5v5h-5zM233 415h5v5h-5zM627 415h10v5h-10zM54 420h20v5h-20zM213 420h20v5h-20zM622 420h15v5h-15zM49 425h5v5h-5zM74 425h25v5h-25zM124 425h5v5h-5zM154 425h35v5h-35zM208 425h5v5h-5zM233 425h25v5h-25zM313 425h35v5h-35zM617 425h15v5h-15zM99 430h5v5h-5zM129 430h10v5h-10zM149 430h5v5h-5zM189 430h4v5h-4zM258 430h5v5h-5zM348 430h5v5h-5zM607 430h10v5h-10zM622 430h5v5h-5zM44 430h5v10h-5zM139 435h10v5h-10zM193 435h5v5h-5zM203 430h5v10h-5zM263 435h5v5h-5zM308 430h5v10h-5zM353 435h5v5h-5zM602 435h5v5h-5zM617 435h10v5h-10zM134 440h5v5h-5zM263 440h10v5h-10zM303 440h5v5h-5zM522 440h5v5h-5zM592 440h10v5h-10zM612 440h10v5h-10zM273 445h5v5h-5zM298 445h5v5h-5zM527 445h5v5h-5zM577 445h15v5h-15zM607 445h5v5h-5zM647 440h5v10h-5zM677 440h5v10h-5zM104 435h5v20h-5zM198 440h5v15h-5zM263 445h5v10h-5zM278 450h10v5h-10zM358 440h5v15h-5zM532 450h10v5h-10zM567 450h15v5h-15zM597 450h10v5h-10zM617 445h5v10h-5zM144 455h5v5h-5zM288 455h5v5h-5zM542 455h25v5h-25zM592 455h5v5h-5zM612 455h5v5h-5zM109 455h5v10h-5zM268 455h5v10h-5zM293 460h5v5h-5zM587 460h5v5h-5zM607 460h10v5h-10zM652 450h5v15h-5zM114 465h5v5h-5zM149 460h5v10h-5zM193 455h5v15h-5zM353 455h5v15h-5zM582 465h10v5h-10zM607 465h5v5h-5zM672 450h5v20h-5zM109 470h5v5h-5zM154 470h5v5h-5zM169 470h15v5h-15zM189 470h9v5h-9zM348 470h10v5h-10zM572 470h15v5h-15zM602 470h5v5h-5zM119 470h5v10h-5zM159 475h10v5h-10zM189 475h4v5h-4zM273 465h5v15h-5zM348 475h5v5h-5zM567 475h10v5h-10zM612 470h5v10h-5zM124 480h5v5h-5zM154 480h5v5h-5zM184 480h9v5h-9zM268 480h5v5h-5zM313 480h5v5h-5zM343 480h10v5h-10zM557 480h10v5h-10zM597 475h5v10h-5zM657 465h5v20h-5zM667 470h5v15h-5zM258 485h15v4h-15zM542 485h15v4h-15zM592 485h5v4h-5zM607 480h5v9h-5zM149 485h5v9h-5zM184 485h5v9h-5zM258 489h10v5h-10zM308 485h5v9h-5zM343 485h5v9h-5zM532 489h10v5h-10zM587 489h5v5h-5zM662 485h5v9h-5zM134 494h15v5h-15zM179 494h10v5h-10zM248 494h10v5h-10zM278 480h5v19h-5zM293 494h15v5h-15zM338 494h10v5h-10zM527 494h5v5h-5zM577 494h10v5h-10zM602 489h5v10h-5zM657 494h5v5h-5zM144 499h5v5h-5zM179 499h5v5h-5zM218 499h5v5h-5zM238 499h15v5h-15zM283 499h10v5h-10zM303 499h5v5h-5zM338 499h5v5h-5zM562 499h15v5h-15zM582 499h5v5h-5zM652 499h5v5h-5zM149 504h40v5h-40zM223 504h15v5h-15zM263 494h5v15h-5zM308 504h40v5h-40zM537 504h25v5h-25zM577 504h5v5h-5zM612 504h20v5h-20zM642 504h10v5h-10zM144 509h5v5h-5zM303 509h5v5h-5zM572 509h5v5h-5zM597 509h15v5h-15zM632 509h10v5h-10zM134 514h15v5h-15zM184 509h5v10h-5zM218 509h5v10h-5zM293 514h15v5h-15zM343 509h5v10h-5zM557 514h15v5h-15zM587 514h10v5h-10zM627 514h5v5h-5zM647 509h5v10h-5zM258 509h5v15h-5zM283 519h10v5h-10zM547 519h10v5h-10zM572 519h15v5h-15zM139 519h5v10h-5zM278 524h5v5h-5zM298 519h5v10h-5zM567 524h5v5h-5zM642 519h5v10h-5zM213 519h5v15h-5zM557 529h10v5h-10zM637 529h5v5h-5zM189 519h4v20h-4zM263 524h5v15h-5zM348 519h5v20h-5zM358 534h5v5h-5zM522 534h15v5h-15zM552 534h10v5h-10zM652 519h5v20h-5zM134 529h5v15h-5zM268 539h10v5h-10zM537 539h15v5h-15zM193 539h5v10h-5zM253 524h5v25h-5zM268 544h5v5h-5zM353 539h5v10h-5zM632 534h5v15h-5zM657 539h5v10h-5zM243 549h10v5h-10zM263 549h5v5h-5zM278 544h5v10h-5zM627 549h5v5h-5zM189 549h4v10h-4zM238 554h5v5h-5zM283 554h5v5h-5zM348 549h5v10h-5zM662 549h5v10h-5zM139 544h5v20h-5zM184 559h5v5h-5zM233 559h5v5h-5zM343 559h5v5h-5zM667 559h5v5h-5zM144 564h5v5h-5zM672 564h10v5h-10z"/><path fill="#727272" d="M64 270h30v5h-30zM154 270h30v5h-30zM223 270h30v5h-30zM313 270h30v5h-30zM383 270h30v5h-30zM472 270h30v5h-30zM223 275h5v10h-5zM248 275h5v20h-5zM313 275h5v25h-5zM64 275h5v30h-5zM89 275h5v30h-5zM154 275h5v30h-5zM179 275h5v30h-5zM223 300h5v5h-5zM248 300h5v5h-5zM338 275h5v30h-5zM383 275h5v30h-5zM408 275h5v30h-5zM472 275h5v30h-5zM497 275h5v30h-5zM64 305h30v5h-30zM154 305h30v5h-30zM223 305h30v5h-30zM313 305h10v5h-10zM333 305h10v5h-10zM383 305h30v5h-30zM472 305h30v5h-30zM383 350h30v5h-30zM472 350h30v5h-30zM94 360h60v5h-60zM258 360h30v5h-30zM298 360h15v5h-15zM383 355h5v30h-5zM408 355h5v30h-5zM472 355h5v30h-5zM497 355h5v30h-5zM383 385h30v5h-30zM472 385h30v5h-30zM94 365h5v45h-5zM149 365h5v45h-5zM253 365h5v45h-5zM308 365h5v45h-5zM64 430h30v5h-30zM154 430h30v5h-30zM223 430h30v5h-30zM313 430h30v5h-30zM383 430h30v5h-30zM472 430h30v5h-30zM64 435h5v30h-5zM89 435h5v30h-5zM154 435h5v30h-5zM179 435h5v30h-5zM223 435h5v30h-5zM248 435h5v30h-5zM313 435h5v30h-5zM338 435h5v30h-5zM383 435h5v30h-5zM408 435h5v30h-5zM472 435h5v30h-5zM497 435h5v30h-5zM64 465h30v5h-30zM154 465h30v5h-30zM223 465h30v5h-30zM313 465h30v5h-30zM383 465h30v5h-30zM472 465h30v5h-30zM64 509h30v5h-30zM154 509h30v5h-30zM223 509h30v5h-30zM313 509h30v5h-30zM383 509h30v5h-30zM472 509h30v5h-30zM64 514h5v30h-5zM89 514h5v30h-5zM154 514h5v30h-5zM179 514h5v30h-5zM223 514h5v30h-5zM248 514h5v30h-5zM313 514h5v30h-5zM338 514h5v30h-5zM383 514h5v30h-5zM408 514h5v30h-5zM472 514h5v30h-5zM497 514h5v30h-5zM64 544h30v5h-30zM154 544h30v5h-30zM223 544h30v5h-30zM313 544h30v5h-30zM383 544h30v5h-30zM472 544h30v5h-30z"/><path fill="#7f90a8" d="M69 275h20v5h-20zM159 275h20v5h-20zM228 275h20v5h-20zM318 275h20v5h-20zM388 275h20v5h-20zM477 275h20v5h-20zM84 280h5v10h-5zM174 280h5v10h-5zM243 280h5v10h-5zM333 280h5v10h-5zM403 280h5v10h-5zM492 280h5v10h-5zM388 355h20v5h-20zM477 355h20v5h-20zM403 360h5v10h-5zM492 360h5v10h-5zM104 370h40v5h-40zM124 375h20v5h-20zM134 380h10v5h-10zM139 385h5v25h-5zM69 435h20v5h-20zM159 435h20v5h-20zM228 435h20v5h-20zM318 435h20v5h-20zM388 435h20v5h-20zM477 435h20v5h-20zM403 440h5v5h-5zM84 440h5v10h-5zM174 440h5v10h-5zM243 440h5v10h-5zM333 440h5v10h-5zM69 514h20v5h-20zM159 514h20v5h-20zM228 514h20v5h-20zM318 514h20v5h-20zM477 514h20v5h-20zM84 519h5v10h-5zM174 519h5v10h-5zM243 519h5v10h-5zM333 519h5v10h-5zM492 519h5v10h-5z"/><path fill="#8998ad" d="M69 280h15v10h-15zM159 280h15v10h-15zM228 280h15v10h-15zM318 280h15v10h-15zM388 280h15v10h-15zM477 280h15v10h-15zM388 360h15v10h-15zM477 360h15v10h-15zM104 375h20v5h-20zM109 380h25v5h-25zM109 385h30v5h-30zM114 390h25v5h-25zM124 395h15v5h-15zM134 400h5v5h-5zM388 440h15v5h-15zM477 440h15v5h-15zM69 440h15v10h-15zM159 440h15v10h-15zM228 440h15v10h-15zM318 440h15v10h-15zM388 445h10v5h-10zM477 445h10v5h-10zM388 519h5v5h-5zM477 519h15v5h-15zM69 519h15v10h-15zM159 519h15v10h-15zM228 519h15v10h-15zM318 519h15v10h-15zM477 524h10v5h-10z"/><path fill="#97a9be" d="M69 290h15v15h-15zM159 290h15v15h-15zM228 290h15v15h-15zM388 290h15v15h-15zM477 290h15v15h-15zM388 370h15v15h-15zM477 370h15v15h-15zM104 380h5v10h-5zM104 390h10v5h-10zM104 395h20v5h-20zM104 400h30v5h-30zM104 405h35v5h-35zM477 450h15v5h-15zM388 455h5v5h-5zM477 455h5v5h-5zM487 455h5v5h-5zM69 450h15v15h-15zM159 450h15v15h-15zM228 450h15v15h-15zM318 450h15v15h-15zM388 460h10v5h-10zM388 524h10v10h-10zM477 529h5v5h-5zM388 534h5v5h-5zM398 534h5v5h-5zM69 529h15v15h-15zM159 529h15v15h-15zM228 529h15v15h-15zM318 529h15v15h-15zM388 539h15v5h-15zM477 539h5v5h-5z"/><path fill="#8b9db4" d="M84 290h5v15h-5zM174 290h5v15h-5zM243 290h5v15h-5zM403 290h5v15h-5zM492 290h5v15h-5zM403 370h5v15h-5zM492 370h5v15h-5zM84 450h5v15h-5zM174 450h5v15h-5zM243 450h5v15h-5zM333 450h5v15h-5zM403 455h5v10h-5zM492 450h5v15h-5zM492 529h5v5h-5zM84 529h5v15h-5zM174 529h5v15h-5zM243 529h5v15h-5zM333 529h5v15h-5zM403 529h5v15h-5z"/><path fill="#b4a987" d="M288 370h15v5h-15zM263 370h5v10h-5zM273 370h5v10h-5zM288 375h5v5h-5zM278 380h5v5h-5zM298 375h5v10h-5zM268 385h5v5h-5zM293 385h5v5h-5zM273 395h5v10h-5zM283 400h5v5h-5zM263 400h5v10h-5zM273 405h15v5h-15zM293 405h10v5h-10z"/><path fill="#a99e82" d="M268 370h5v10h-5zM293 375h5v10h-5zM283 370h5v20h-5zM278 400h5v5h-5zM298 395h5v10h-5zM268 395h5v15h-5zM288 395h5v15h-5z"/><path fill="#a67f5f" d="M263 380h10v5h-10zM278 385h5v5h-5zM288 380h5v10h-5zM298 385h5v5h-5zM273 390h30v5h-30zM263 385h5v15h-5zM278 395h10v5h-10zM293 395h5v10h-5z"/></svg>
<div class="abs" id="top" style="left:0;top:0;width:1185px;height:80px;background:#323232"></div>
<div class="abs" id="menubar">
<span style="left:-8.8px;transform:scaleX(.905)">Type</span><span style="left:29.1px;transform:scaleX(.897)">Select</span><span style="left:72.4px;transform:scaleX(.918)">Filter</span><span style="left:110.1px;transform:scaleX(.905)">View</span><span style="left:147.5px;transform:scaleX(.908)">Plugins</span><span style="left:197.7px;transform:scaleX(.962)">Window</span><span style="left:253.4px;transform:scaleX(.903)">Help</span>
</div>
<div class="abs" id="mline"></div>
<div class="abs" id="optbar"></div>
<div class="abs" id="oline"></div>
<div class="abs" style="left:0;top:23px;width:1px;height:23px;background:#3a3a3a"></div>
<span class="lbl" style="left:8px;top:29px">Mode:</span>
<div class="box" style="left:41px;top:25px;width:53px;height:22px;border-radius:3px;border-color:#636363"></div>
<span class="lbl" style="left:49px;top:31px;color:#f0f0f0">Pencil</span>
<svg class="ic" style="left:82px;top:34px" width="10" height="7"><path d="M1.5 1.5L5 5L8.5 1.5" fill="none" stroke="#c8c8c8" stroke-width="1.1"/></svg>
<span class="lbl" style="left:103px;top:29px">Opacity:</span>
<div class="box" style="left:145px;top:26px;width:51px;height:16px;border-radius:2px"></div>
<div class="abs" style="left:180px;top:27px;width:1px;height:14px;background:#666"></div>
<span class="lbl" style="left:149px;top:29px;color:#f0f0f0">100%</span>
<svg class="ic" style="left:184px;top:31px" width="9" height="7"><path d="M1 1.5L4.5 5L8 1.5" fill="none" stroke="#c8c8c8" stroke-width="1.1"/></svg>
<svg class="ic" style="left:206px;top:26px" width="20" height="18" viewBox="0 0 20 18"><defs><pattern id="hx" width="2" height="2" patternUnits="userSpaceOnUse"><rect width="2" height="2" fill="#5e5e5e"/><rect width="1" height="1" fill="#8e8e8e"/><rect x="1" y="1" width="1" height="1" fill="#8e8e8e"/></pattern></defs><circle cx="9.3" cy="10.1" r="6.8" fill="url(#hx)" stroke="#d4d4d4" stroke-width="1.1"/><path d="M9.2 10.3L11.78 9.89L18.93 3.55L17.07 1.45L9.92 7.79Z" fill="#e0e0e0" stroke="#535353" stroke-width="1.6" stroke-linejoin="round" paint-order="stroke"/></svg>
<div class="sep" style="left:235px"></div>
<span class="lbl" style="left:245px;top:29px">Flow:</span>
<div class="box" style="left:272px;top:26px;width:51px;height:16px;border-radius:2px;border-color:#5e5e5e;background:#454545"></div>
<div class="abs" style="left:307px;top:27px;width:1px;height:14px;background:#5e5e5e"></div>
<svg class="ic" style="left:311px;top:31px" width="9" height="7"><path d="M1 1.5L4.5 5L8 1.5" fill="none" stroke="#6c6c6c" stroke-width="1.1"/></svg>
<svg class="ic" style="left:333px;top:27px" width="20" height="16" viewBox="0 0 20 16"><path d="M7.6 1.1Q0.300 3.500 1.100 7.500Q1.700 11.200 5.100 12.900Q2.900 7 7.600 1.100Z" fill="#747474"/><path d="M6.600 13.900L8 10.500L13.500 5L16.600 4.400L16 7L14.300 8.300L16.200 11.500L15.300 13.200L13.500 13.200L12.300 11.500L10 12.200L8.700 12.700Z" fill="none" stroke="#9c9c9c" stroke-width="1" stroke-linejoin="round"/><path d="M13.200 5.200L16.600 4.200L16.300 6.800L14.500 8.300Z" fill="#9c9c9c"/><circle cx="18" cy="2.100" r="0.900" fill="#9c9c9c"/></svg>
<div class="sep" style="left:362px"></div>
<span class="lbl" style="left:371px;top:29px">Smoothing:</span>
<div class="box" style="left:427px;top:26px;width:51px;height:16px;border-radius:2px;border-color:#5e5e5e;background:#454545"></div>
<div class="abs" style="left:462px;top:27px;width:1px;height:14px;background:#5e5e5e"></div>
<svg class="ic" style="left:466px;top:31px" width="9" height="7"><path d="M1 1.5L4.5 5L8 1.5" fill="none" stroke="#6c6c6c" stroke-width="1.1"/></svg>
<svg class="ic" style="left:488px;top:27px" width="18" height="18" viewBox="0 0 18 18"><g transform="translate(7.600,7.400)"><g fill="#dedede"><rect x="-1.500" y="-6.500" width="3" height="13"/><rect x="-1.500" y="-6.500" width="3" height="13" transform="rotate(45)"/><rect x="-1.500" y="-6.500" width="3" height="13" transform="rotate(90)"/><rect x="-1.500" y="-6.500" width="3" height="13" transform="rotate(135)"/><circle r="4.800"/></g><circle r="2.400" fill="#535353"/></g><path d="M13 15h4.200l-2.100 2z" fill="#dedede"/></svg>
<div class="sep" style="left:513px"></div>
<svg class="ic" style="left:519px;top:28px" width="16" height="11" viewBox="0 0 16 11"><path d="M1 9.5H14.5M1 9.5L11 1.5" fill="none" stroke="#d0d0d0" stroke-width="1.2"/><path d="M9.5 3.5Q12.3 6 12 9.5" fill="none" stroke="#d0d0d0" stroke-width="1"/></svg>
<div class="box" style="left:537px;top:25px;width:37px;height:18px;border-color:#686868"></div>
<span class="lbl" style="left:542px;top:29px;color:#e8e8e8">0°</span>
<div class="sep" style="left:578px"></div>
<div class="box" style="left:583px;top:29px;width:10px;height:10px;border-radius:2px;border-color:#8a8a8a;background:#484848"></div>
<span class="lbl" style="left:598px;top:29px;color:#e2e2e2">Erase to History</span>
<svg class="ic" style="left:685px;top:25px" width="20" height="19" viewBox="0 0 20 19"><circle cx="8.500" cy="10" r="7" fill="none" stroke="#d0d0d0" stroke-width="1.100"/><circle cx="8.500" cy="10" r="3.900" fill="none" stroke="#d0d0d0" stroke-width="1.100"/><path d="M7.700 10.900L10.430 10.390L18.610 3.360L16.790 1.240L8.610 8.270Z" fill="#e0e0e0" stroke="#535353" stroke-width="1.800" stroke-linejoin="round" paint-order="stroke"/></svg>
<svg class="ic" style="left:717px;top:26px" width="20" height="20" viewBox="0 0 20 20"><path d="M8 5C6 2.5 2.5 1.5 1.5 3C1 5 2.5 8 5 9C3 9.5 2.5 12 4 14C5.5 15.5 7.5 14.5 8 12.5" fill="none" stroke="#d0d0d0" stroke-width="1.2"/><path d="M11 5C13 2.5 16.5 1.5 17.5 3C18 5 16.5 8 14 9C16 9.5 16.5 12 15 14C13.500 15.5 11.500 14.5 11 12.500" fill="none" stroke="#d0d0d0" stroke-width="1.2"/><path d="M9.500 1V18" stroke="#e8e8e8" stroke-width="1" stroke-dasharray="1 1" fill="none"/><path d="M14 16.500h4l-2 2z" fill="#dedede"/></svg>
<div class="abs" id="tabbar"></div>
<div class="abs" id="tab"></div>
<span class="lbl" style="left:-2.6px;top:60px;font-weight:bold;font-size:11px;color:#f0f0f0">&#8226; 498% (detail, RGB/8)</span>
<svg class="ic" style="left:119px;top:62px" width="8" height="8"><path d="M0.500 0.500L7.500 7.500M7.500 0.500L0.500 7.500" stroke="#c4c4c4" stroke-width="1" fill="none"/></svg>
</div></body></html>
